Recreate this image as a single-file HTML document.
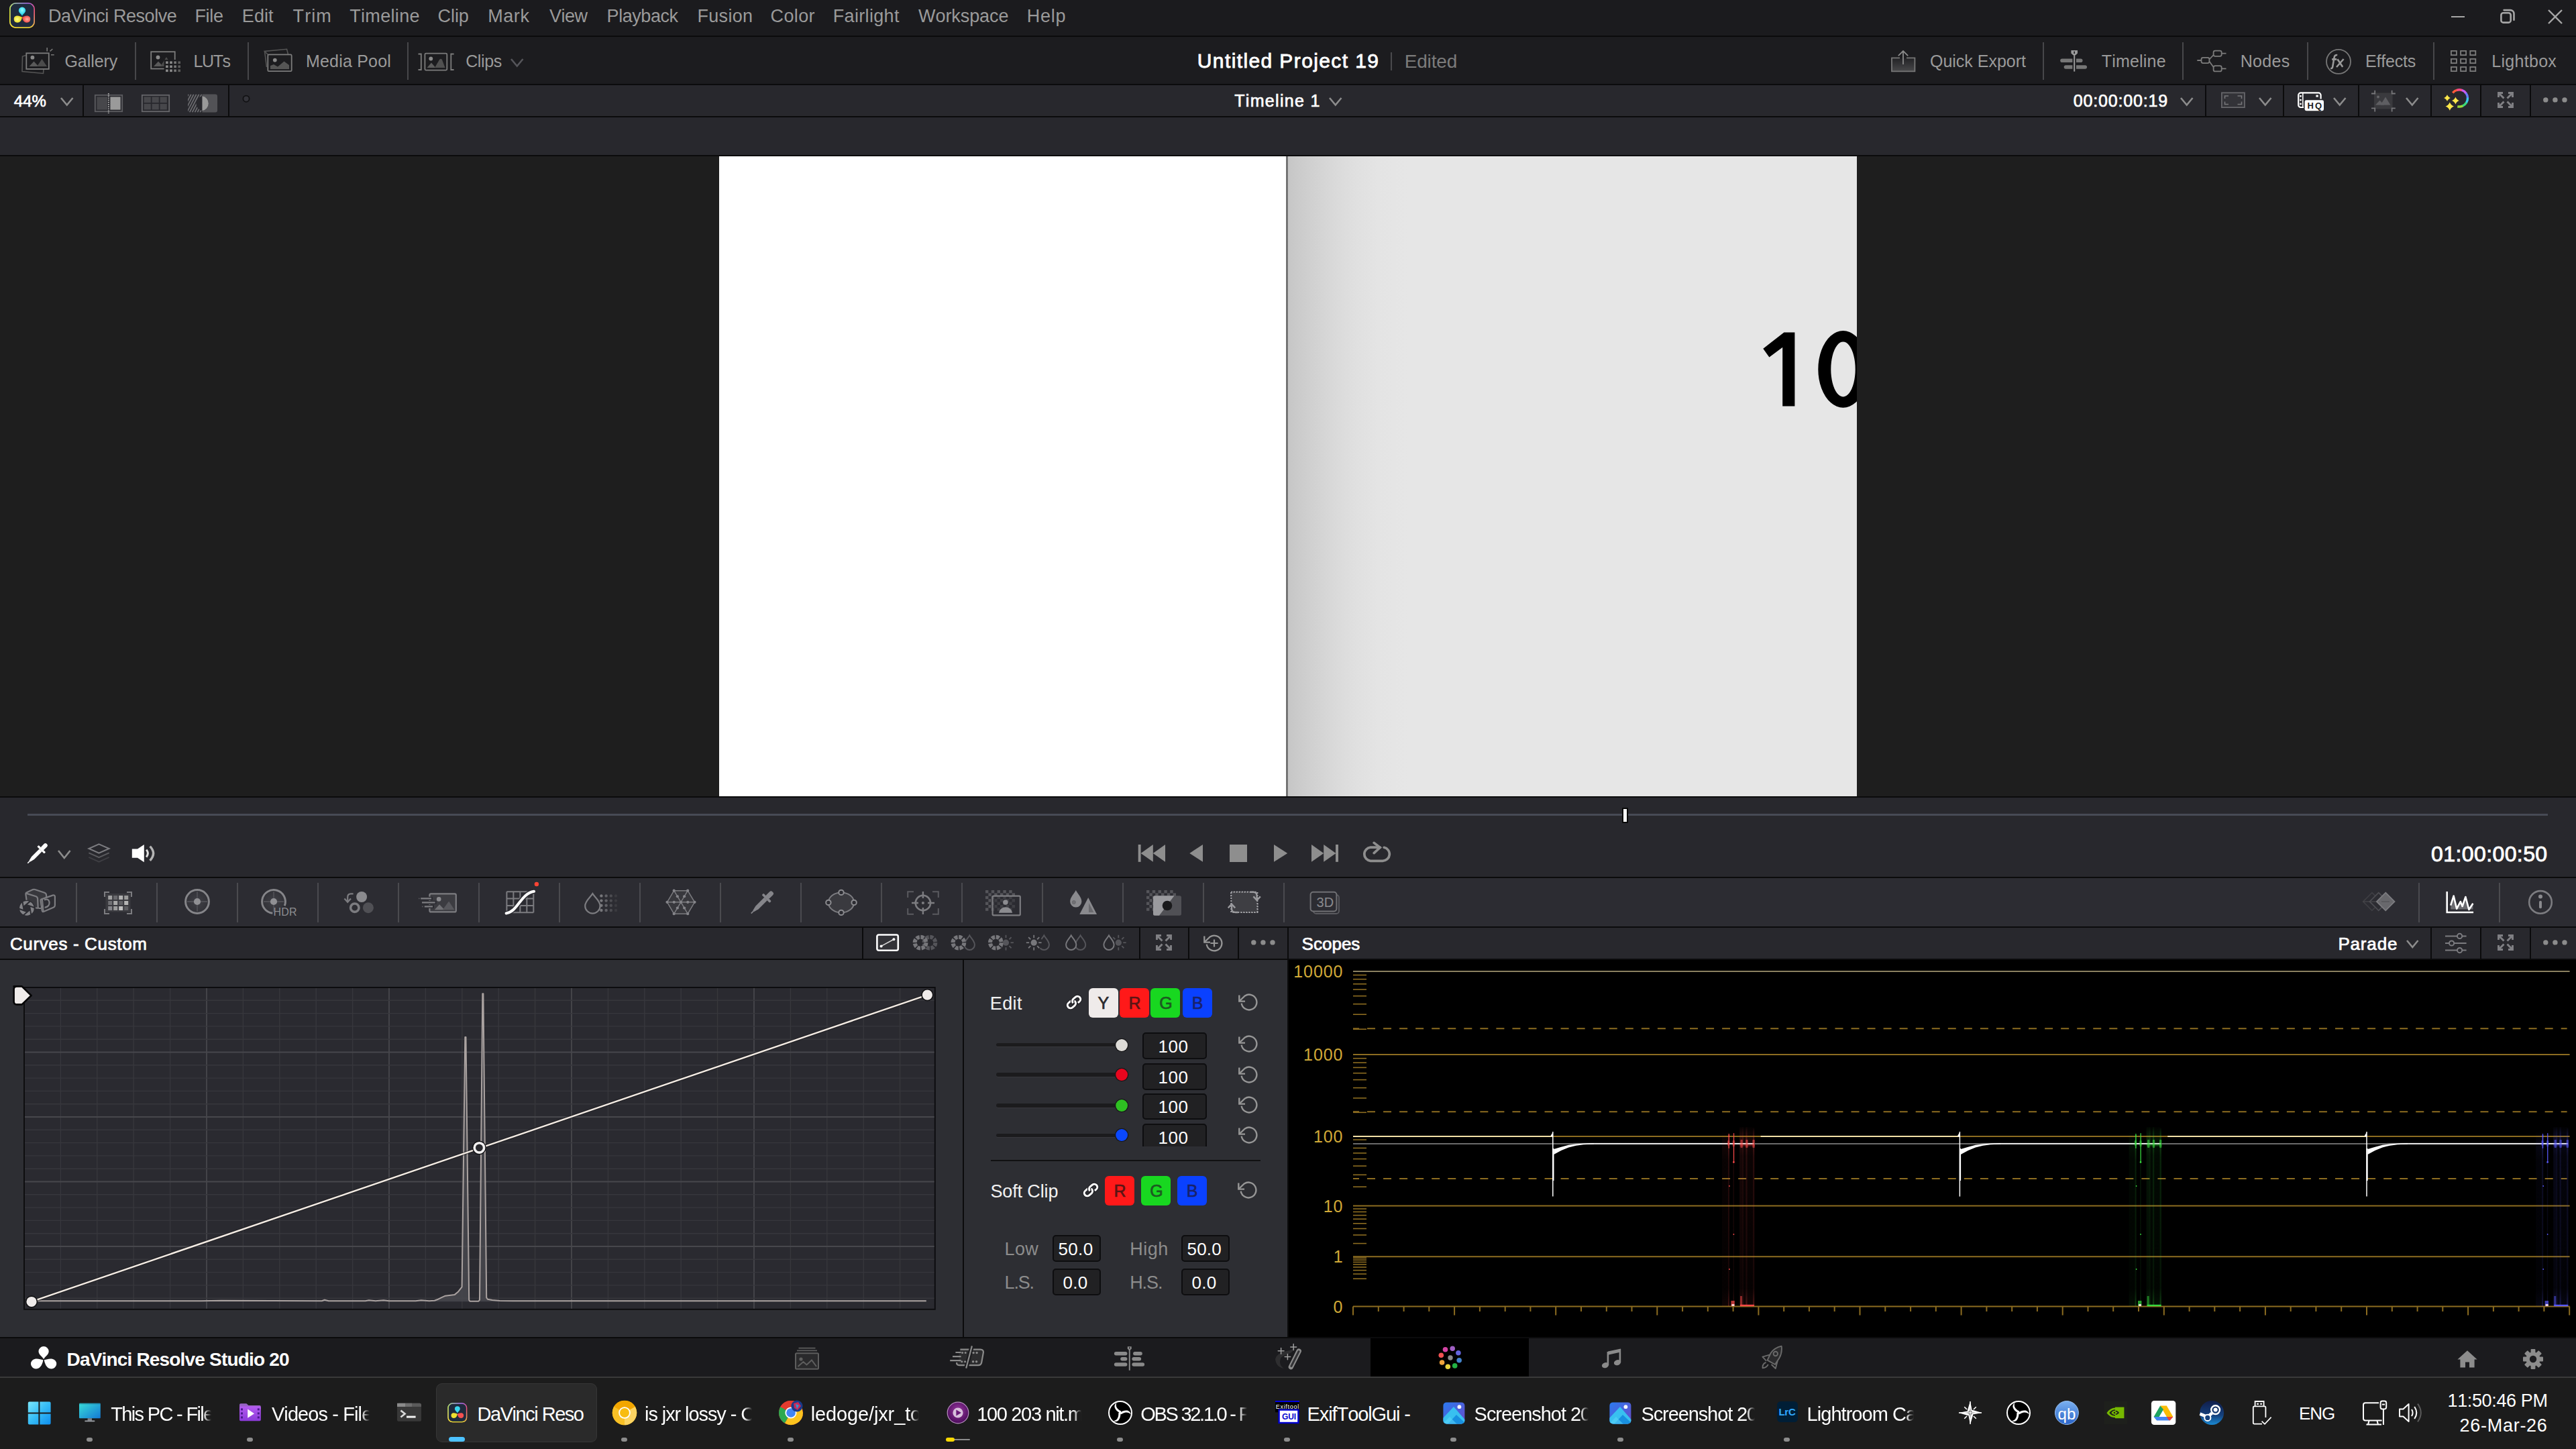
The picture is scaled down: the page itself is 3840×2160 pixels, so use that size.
<!DOCTYPE html>
<html><head><meta charset="utf-8"><title>DaVinci Resolve</title>
<style>
html,body{margin:0;padding:0;background:#1e1e1e;}
body{width:3840px;height:2160px;position:relative;overflow:hidden;font-family:"Liberation Sans",sans-serif;}
.t{position:absolute;white-space:nowrap;font-kerning:none;font-family:"Liberation Sans",sans-serif;}
svg{overflow:visible}
</style></head><body>

<!-- p01_bg.py -->
<div style="position:absolute;left:0px;top:0px;width:3840px;height:53px;background:#1b1b1e;"></div>
<div style="position:absolute;left:0px;top:53px;width:3840px;height:2px;background:#0b0b0c;"></div>
<div style="position:absolute;left:0px;top:55px;width:3840px;height:70px;background:#1c1c1f;"></div>
<div style="position:absolute;left:0px;top:125px;width:3840px;height:2px;background:#0b0b0c;"></div>
<div style="position:absolute;left:0px;top:127px;width:3840px;height:46px;background:#28282d;"></div>
<div style="position:absolute;left:0px;top:173px;width:3840px;height:2px;background:#0b0b0c;"></div>
<div style="position:absolute;left:0px;top:175px;width:3840px;height:56px;background:#28282d;"></div>
<div style="position:absolute;left:0px;top:231px;width:3840px;height:2px;background:#0b0b0c;"></div>
<div style="position:absolute;left:0px;top:233px;width:3840px;height:954px;background:#1e1e1e;"></div>
<div style="position:absolute;left:1072px;top:233px;width:846px;height:954px;background:#ffffff;"></div>
<div style="position:absolute;left:1918px;top:233px;width:850px;height:954px;background:#e6e6e6;"></div>
<div style="position:absolute;left:1918px;top:233px;width:180px;height:954px;background:linear-gradient(90deg,#c5c5c5 0%,#cacaca 8%,#d2d2d2 24%,#dadada 41%,#e0e0e0 58%,#e4e4e4 76%,#e6e6e6 100%);"></div>
<div style="position:absolute;left:1916.6px;top:233px;width:3.2px;height:954px;background:linear-gradient(90deg,#8a8a8a,#646464 40%,#6a6a6a 70%,#9a9a9a);"></div>
<div style="position:absolute;left:0px;top:1187px;width:3840px;height:2px;background:#0b0b0c;"></div>
<div style="position:absolute;left:0px;top:1189px;width:3840px;height:118px;background:#28282d;"></div>
<div style="position:absolute;left:0px;top:1307px;width:3840px;height:2.2px;background:#0b0b0c;"></div>
<div style="position:absolute;left:0px;top:1309.2px;width:3840px;height:71.8px;background:#2c2c32;"></div>
<div style="position:absolute;left:0px;top:1381px;width:3840px;height:2px;background:#0b0b0c;"></div>
<div style="position:absolute;left:0px;top:1383px;width:3840px;height:46px;background:#28282d;"></div>
<div style="position:absolute;left:0px;top:1429px;width:3840px;height:2px;background:#0b0b0c;"></div>
<div style="position:absolute;left:0px;top:1431px;width:1920px;height:562px;background:#2d2e33;"></div>
<div style="position:absolute;left:1435px;top:1431px;width:2px;height:562px;background:#0b0b0c;"></div>
<div style="position:absolute;left:1920px;top:1431px;width:1920px;height:562px;background:#000;"></div>
<div style="position:absolute;left:0px;top:1993px;width:3840px;height:2px;background:#0b0b0c;"></div>
<div style="position:absolute;left:0px;top:1995px;width:3840px;height:57px;background:#1b1b1e;"></div>
<div style="position:absolute;left:2043px;top:1995px;width:236px;height:57px;background:#000;"></div>
<div style="position:absolute;left:0px;top:2052px;width:3840px;height:2px;background:#3a3a3a;"></div>
<div style="position:absolute;left:0px;top:2054px;width:3840px;height:106px;background:#1c1c1c;"></div>
<!-- p02_top.py -->
<svg style="position:absolute;left:2600px;top:480px;overflow:hidden" width="168" height="140" viewBox="0 0 168 140"><polygon points="59.4,15.4 75.4,15.4 75.4,125.5 57.2,125.5 57.2,37.8 37.4,52.6 28.3,39.7" fill="#000"/><path fill-rule="evenodd" fill="#000" d="M147.5 13.1 a37.2 57.3 0 1 0 0.01 0 Z M147.5 29.4 a18.2 41 0 1 1 -0.01 0 Z"/></svg>
<svg style="position:absolute;left:14px;top:4px;" width="38" height="38" viewBox="0 0 38 38"><defs><linearGradient id="lg1" x1="0" y1="0" x2="1" y2="1"><stop offset="0" stop-color="#3fe0e8"/><stop offset="0.35" stop-color="#9a6cf0"/><stop offset="0.65" stop-color="#ff4a6a"/><stop offset="1" stop-color="#ff9a30"/></linearGradient><linearGradient id="lg2" x1="1" y1="0" x2="0" y2="1"><stop offset="0" stop-color="#c050e0" stop-opacity="0"/><stop offset="0.6" stop-color="#d8e030" stop-opacity="0.9"/><stop offset="1" stop-color="#f0f020"/></linearGradient><radialGradient id="rc" cx="0.5" cy="0.35" r="0.6"><stop offset="0" stop-color="#9ff"/><stop offset="1" stop-color="#10c8e8"/></radialGradient><radialGradient id="ry" cx="0.4" cy="0.5" r="0.6"><stop offset="0" stop-color="#ff8"/><stop offset="1" stop-color="#e8d818"/></radialGradient><radialGradient id="rr" cx="0.6" cy="0.5" r="0.6"><stop offset="0" stop-color="#ffb0a0"/><stop offset="1" stop-color="#f03838"/></radialGradient></defs><rect x="0.8" y="0.8" width="36.4" height="36.4" rx="9" fill="#1f2b3d" stroke="url(#lg1)" stroke-width="1.6"/><rect x="0.8" y="0.8" width="36.4" height="36.4" rx="9" fill="none" stroke="url(#lg2)" stroke-width="1.6"/><path d="M19 6.5 a5.2 5.2 0 0 1 5.2 5.2 c0 3.2 -3.4 4.6 -5.2 8 c-1.8 -3.4 -5.2 -4.8 -5.2 -8 a5.2 5.2 0 0 1 5.2 -5.2Z" fill="url(#rc)"/><path d="M19 21.5 c-0.6 3.6 -2.2 8.2 -7.2 8.2 a5.1 5.1 0 0 1 -1 -10.1 c3.4 -0.6 5.6 1.2 8.2 1.9Z" fill="url(#ry)"/><path d="M19 21.5 c0.6 3.6 2.2 8.2 7.2 8.2 a5.1 5.1 0 0 0 1 -10.1 c-3.4 -0.6 -5.6 1.2 -8.2 1.9Z" fill="url(#rr)"/></svg>
<div class="t" style="left:72.0px;top:9.0px;font-size:27px;line-height:30px;color:#9a9a9a;letter-spacing:-0.45px;">DaVinci Resolve</div>
<div class="t" style="left:290.4px;top:9.0px;font-size:27px;line-height:30px;color:#9a9a9a;letter-spacing:-0.30px;">File</div>
<div class="t" style="left:360.8px;top:9.0px;font-size:27px;line-height:30px;color:#9a9a9a;letter-spacing:0.10px;">Edit</div>
<div class="t" style="left:436.6px;top:9.0px;font-size:27px;line-height:30px;color:#9a9a9a;letter-spacing:1.07px;">Trim</div>
<div class="t" style="left:521.2px;top:9.0px;font-size:27px;line-height:30px;color:#9a9a9a;letter-spacing:0.33px;">Timeline</div>
<div class="t" style="left:652.6px;top:9.0px;font-size:27px;line-height:30px;color:#9a9a9a;letter-spacing:-0.10px;">Clip</div>
<div class="t" style="left:727.2px;top:9.0px;font-size:27px;line-height:30px;color:#9a9a9a;letter-spacing:0.59px;">Mark</div>
<div class="t" style="left:818.9px;top:9.0px;font-size:27px;line-height:30px;color:#9a9a9a;letter-spacing:-0.49px;">View</div>
<div class="t" style="left:904.6px;top:9.0px;font-size:27px;line-height:30px;color:#9a9a9a;letter-spacing:-0.45px;">Playback</div>
<div class="t" style="left:1039.4px;top:9.0px;font-size:27px;line-height:30px;color:#9a9a9a;letter-spacing:0.33px;">Fusion</div>
<div class="t" style="left:1148.6px;top:9.0px;font-size:27px;line-height:30px;color:#9a9a9a;letter-spacing:0.37px;">Color</div>
<div class="t" style="left:1241.8px;top:9.0px;font-size:27px;line-height:30px;color:#9a9a9a;letter-spacing:0.32px;">Fairlight</div>
<div class="t" style="left:1369.1px;top:9.0px;font-size:27px;line-height:30px;color:#9a9a9a;letter-spacing:-0.08px;">Workspace</div>
<div class="t" style="left:1530.7px;top:9.0px;font-size:27px;line-height:30px;color:#9a9a9a;letter-spacing:0.74px;">Help</div>
<div style="position:absolute;left:3654px;top:23.8px;width:20px;height:2.4px;background:#a6a6a6;"></div>
<svg style="position:absolute;left:3725px;top:12px;" width="26" height="26" viewBox="0 0 26 26"><rect x="3.4" y="7.3" width="14.3" height="14.3" rx="3.2" fill="none" stroke="#a6a6a6" stroke-width="2.6"/><path d="M7.6 3.1 H17.3 A5.2 5.2 0 0 1 22.5 8.3 V17.7" fill="none" stroke="#a6a6a6" stroke-width="2.6" stroke-linecap="round"/></svg>
<svg style="position:absolute;left:3797px;top:13px;" width="24" height="24" viewBox="0 0 24 24"><path d="M2 2 L22 22 M22 2 L2 22" stroke="#a6a6a6" stroke-width="2.4" fill="none"/></svg>
<svg style="position:absolute;left:30px;top:68px;" width="54" height="44" viewBox="0 0 54 44"><path d="M8.6 14.5 L3.5 16 L3 38.5 L34.5 41.5 L35 35.5" fill="none" stroke="#555" stroke-width="1.6"/><rect x="9.3" y="11.3" width="33.5" height="23.6" fill="none" stroke="#7c7c7c" stroke-width="1.8"/><circle cx="18.4" cy="17.7" r="2.9" fill="#8a8a8a"/><polygon points="13.5,31 20.5,23.5 27.5,31" fill="#5a5a5a"/><polygon points="25,31 32.5,20 40,31" fill="#4c4c4c"/><path d="M40.2 3 V8.4 M44.5 8.4 L48.4 5 M46 13.8 H50.7" stroke="#777" stroke-width="1.6" fill="none"/></svg>
<div class="t" style="left:96.5px;top:77.0px;font-size:25px;line-height:28px;color:#9a9a9a;letter-spacing:-0.08px;">Gallery</div>
<div style="position:absolute;left:201px;top:63px;width:2px;height:56px;background:#47474a;"></div>
<svg style="position:absolute;left:224px;top:76px;" width="48" height="34" viewBox="0 0 48 34"><rect x="1.2" y="1.2" width="35.5" height="25.3" fill="none" stroke="#7c7c7c" stroke-width="1.8"/><circle cx="11.5" cy="9.5" r="2.9" fill="#8a8a8a"/><polygon points="5,23 12,15.5 19,23" fill="#5a5a5a"/><polygon points="15,23 24,9 33,23" fill="#4c4c4c"/><rect x="20.6" y="13" width="26" height="20" fill="#1c1c1f"/><rect x="23.1" y="15.4" width="3.6" height="3.6" fill="#8c8c8c"/><rect x="23.1" y="21.45" width="3.6" height="3.6" fill="#8c8c8c"/><rect x="23.1" y="27.5" width="3.6" height="3.6" fill="#8c8c8c"/><rect x="29.2" y="15.4" width="3.6" height="3.6" fill="#8c8c8c"/><rect x="29.2" y="21.45" width="3.6" height="3.6" fill="#8c8c8c"/><rect x="29.2" y="27.5" width="3.6" height="3.6" fill="#8c8c8c"/><rect x="35.3" y="15.4" width="3.6" height="3.6" fill="#777"/><rect x="35.3" y="21.45" width="3.6" height="3.6" fill="#777"/><rect x="35.3" y="27.5" width="3.6" height="3.6" fill="#777"/><rect x="41.4" y="15.4" width="3.6" height="3.6" fill="#5c5c5c"/><rect x="41.4" y="21.45" width="3.6" height="3.6" fill="#5c5c5c"/><rect x="41.4" y="27.5" width="3.6" height="3.6" fill="#5c5c5c"/></svg>
<div class="t" style="left:288.6px;top:77.0px;font-size:25px;line-height:28px;color:#9a9a9a;letter-spacing:-1.42px;">LUTs</div>
<div style="position:absolute;left:369px;top:63px;width:2px;height:56px;background:#47474a;"></div>
<svg style="position:absolute;left:390px;top:70px;" width="48" height="40" viewBox="0 0 48 40"><path d="M9.5 11.5 L4.5 6.5 L37.5 3.3 L39.5 11" fill="none" stroke="#555" stroke-width="1.6"/><path d="M4.5 6.5 L7.5 30" fill="none" stroke="#555" stroke-width="1.6"/><rect x="9.3" y="11.4" width="35.4" height="24.8" rx="1.5" fill="none" stroke="#7c7c7c" stroke-width="1.8"/><circle cx="19.8" cy="19.6" r="2.9" fill="#8a8a8a"/><path d="M13 33 V28 L18 26 L24 29.5 L33.5 21.5 L41 27 V33 Z" fill="#555"/></svg>
<div class="t" style="left:455.9px;top:77.0px;font-size:25px;line-height:28px;color:#9a9a9a;letter-spacing:0.21px;">Media Pool</div>
<div style="position:absolute;left:607px;top:63px;width:2px;height:56px;background:#47474a;"></div>
<svg style="position:absolute;left:622px;top:76px;" width="58" height="32" viewBox="0 0 58 32"><path d="M1.5 4.5 H5.8 V28 H1.5" fill="none" stroke="#7c7c7c" stroke-width="1.8"/><path d="M54.6 4.5 H50.3 V28 H54.6" fill="none" stroke="#7c7c7c" stroke-width="1.8"/><rect x="11.4" y="3.7" width="32.9" height="24.9" rx="1.5" fill="none" stroke="#7c7c7c" stroke-width="1.8"/><circle cx="20.3" cy="11.5" r="2.9" fill="#8a8a8a"/><polygon points="14.5,25 21,17.5 27.5,25" fill="#5c5c5c"/><path d="M26 25 L33 13 Q35 10.5 37 13 L41.5 25 Z" fill="#505050"/></svg>
<div class="t" style="left:694.2px;top:77.0px;font-size:25px;line-height:28px;color:#9a9a9a;letter-spacing:-0.40px;">Clips</div>
<svg style="position:absolute;left:759.55px;top:85.95px;" width="21.5" height="14.5" viewBox="0 0 21.5 14.5"><path d="M2 2 L10.75 12.5 L19.5 2" fill="none" stroke="#55555a" stroke-width="2.6" stroke-linecap="butt" stroke-linejoin="miter"/></svg>
<div class="t" style="left:1784.8px;top:74.0px;font-size:30px;line-height:33px;color:#fff;letter-spacing:1.39px;-webkit-text-stroke:0.84px #fff;">Untitled Project 19</div>
<div style="position:absolute;left:2073px;top:77.5px;width:2px;height:27px;background:#4a4a4d;"></div>
<div class="t" style="left:2093.7px;top:76.0px;font-size:28px;line-height:31px;color:#7b7b7b;letter-spacing:-0.16px;">Edited</div>
<svg style="position:absolute;left:2816px;top:72px;" width="44" height="38" viewBox="0 0 44 38"><defs><linearGradient id="qe" x1="0" y1="0" x2="0" y2="1"><stop offset="0" stop-color="#222225"/><stop offset="1" stop-color="#48484a"/></linearGradient></defs><path d="M16 14.4 H4 V34.4 H38.4 V14.4 H26" fill="url(#qe)" stroke="#777" stroke-width="1.8"/><path d="M21 24 V4.5 M13.8 11.2 L21 4 L28.2 11.2" fill="none" stroke="#8a8a8a" stroke-width="1.8"/></svg>
<div class="t" style="left:2877.0px;top:77.0px;font-size:25px;line-height:28px;color:#9a9a9a;letter-spacing:-0.01px;">Quick Export</div>
<div style="position:absolute;left:3045px;top:63px;width:2px;height:56px;background:#47474a;"></div>
<svg style="position:absolute;left:3068px;top:72px;" width="46" height="38" viewBox="0 0 46 38"><rect x="3.2" y="15.5" width="33.3" height="5.6" rx="2.8" fill="#777"/><rect x="8.7" y="25.2" width="34.3" height="5.6" rx="2.8" fill="#777"/><rect x="21.4" y="10" width="5.6" height="24" fill="#1c1c1f"/><rect x="23.2" y="6" width="2" height="28.6" fill="#9a9a9a"/><path d="M19.4 3 H29 V7.5 L26 10.2 H22.4 L19.4 7.5 Z" fill="#9a9a9a"/><rect x="23.4" y="4.6" width="1.6" height="3.4" fill="#1c1c1f"/></svg>
<div class="t" style="left:3132.7px;top:77.0px;font-size:25px;line-height:28px;color:#9a9a9a;letter-spacing:0.21px;">Timeline</div>
<div style="position:absolute;left:3253px;top:63px;width:2px;height:56px;background:#47474a;"></div>
<svg style="position:absolute;left:3272px;top:72px;" width="50" height="38" viewBox="0 0 50 38"><g fill="none" stroke="#7c7c7c" stroke-width="1.8"><rect x="9.5" y="13.9" width="11.9" height="8.2" rx="2.5"/><rect x="27.6" y="3.6" width="12.1" height="8.2" rx="2.5"/><rect x="27.6" y="26.2" width="12.1" height="8.2" rx="2.5"/><path d="M3.3 18 H9.5 M39.7 7.7 H46.5 M39.7 30.3 H46.5 M21.4 16.5 L27.6 10 M21.4 19.5 L27.6 28"/></g></svg>
<div class="t" style="left:3339.8px;top:77.0px;font-size:25px;line-height:28px;color:#9a9a9a;letter-spacing:0.27px;">Nodes</div>
<div style="position:absolute;left:3439px;top:63px;width:2px;height:56px;background:#47474a;"></div>
<svg style="position:absolute;left:3466px;top:72px;" width="40" height="40" viewBox="0 0 40 40"><circle cx="20" cy="19.8" r="18" fill="none" stroke="#777" stroke-width="1.8"/><path d="M18.2 10.2 Q14.4 9.4 13.6 13.4 L11.2 27.6 Q10.8 30.4 8.2 29.8 M10.2 16.4 H17.2 M18.4 16.2 L26.2 27.8 M27.6 16 L17 28" fill="none" stroke="#9a9a9a" stroke-width="2.6"/></svg>
<div class="t" style="left:3526.0px;top:77.0px;font-size:25px;line-height:28px;color:#9a9a9a;letter-spacing:-0.18px;">Effects</div>
<div style="position:absolute;left:3627px;top:63px;width:2px;height:56px;background:#47474a;"></div>
<svg style="position:absolute;left:3652px;top:74px;" width="42" height="36" viewBox="0 0 42 36"><rect x="1.9" y="1.9" width="8" height="6.2" fill="none" stroke="#7c7c7c" stroke-width="1.8"/><rect x="1.9" y="13.9" width="8" height="6.2" fill="none" stroke="#7c7c7c" stroke-width="1.8"/><rect x="1.9" y="25.9" width="8" height="6.2" fill="none" stroke="#7c7c7c" stroke-width="1.8"/><rect x="16.1" y="1.9" width="8" height="6.2" fill="none" stroke="#7c7c7c" stroke-width="1.8"/><rect x="16.1" y="13.9" width="8" height="6.2" fill="none" stroke="#7c7c7c" stroke-width="1.8"/><rect x="16.1" y="25.9" width="8" height="6.2" fill="none" stroke="#7c7c7c" stroke-width="1.8"/><rect x="30.3" y="1.9" width="8" height="6.2" fill="none" stroke="#7c7c7c" stroke-width="1.8"/><rect x="30.3" y="13.9" width="8" height="6.2" fill="none" stroke="#7c7c7c" stroke-width="1.8"/><rect x="30.3" y="25.9" width="8" height="6.2" fill="none" stroke="#7c7c7c" stroke-width="1.8"/></svg>
<div class="t" style="left:3714.3px;top:77.0px;font-size:25px;line-height:28px;color:#9a9a9a;letter-spacing:0.29px;">Lightbox</div>
<!-- p03_viewbar.py -->
<div class="t" style="left:20.8px;top:137.0px;font-size:24px;line-height:27px;color:#fff;letter-spacing:-0.00px;-webkit-text-stroke:0.67px #fff;">44%</div>
<svg style="position:absolute;left:89.25px;top:143.75px;" width="21.5" height="14.5" viewBox="0 0 21.5 14.5"><path d="M2 2 L10.75 12.5 L19.5 2" fill="none" stroke="#8c8c8c" stroke-width="2.6" stroke-linecap="butt" stroke-linejoin="miter"/></svg>
<div style="position:absolute;left:123px;top:127px;width:2px;height:46px;background:#0b0b0c;"></div>
<svg style="position:absolute;left:140px;top:138px;" width="46" height="32" viewBox="0 0 46 32"><rect x="1.8" y="3.8" width="40.4" height="24.4" fill="none" stroke="#5c5c60" stroke-width="1.8"/><rect x="4.4" y="6.4" width="15.6" height="19.2" fill="#47474b"/><rect x="24.4" y="6.4" width="15.2" height="19.2" fill="#9a9a9a"/><path d="M21.8 1 V31" stroke="#b0b0b0" stroke-width="1.8" stroke-dasharray="1.7 1.5"/></svg>
<svg style="position:absolute;left:210px;top:138px;" width="46" height="32" viewBox="0 0 46 32"><rect x="1.8" y="3.8" width="40.4" height="24.4" fill="none" stroke="#66666a" stroke-width="1.8"/><rect x="4.6" y="6.4" width="10.2" height="8.6" fill="#47474b"/><rect x="4.6" y="16.8" width="10.2" height="8.6" fill="#47474b"/><rect x="16.6" y="6.4" width="10.2" height="8.6" fill="#47474b"/><rect x="16.6" y="16.8" width="10.2" height="8.6" fill="#47474b"/><rect x="28.6" y="6.4" width="10.2" height="8.6" fill="#47474b"/><rect x="28.6" y="16.8" width="10.2" height="8.6" fill="#47474b"/></svg>
<svg style="position:absolute;left:279px;top:138px;" width="48" height="32" viewBox="0 0 48 32"><defs><clipPath id="hcl"><rect x="1" y="2.5" width="21.5" height="27"/></clipPath></defs><g clip-path="url(#hcl)"><path d="M-12 29.5 L2 2.5" stroke="#6c6c70" stroke-width="1.7"/><path d="M-8.1 29.5 L5.9 2.5" stroke="#6c6c70" stroke-width="1.7"/><path d="M-4.2 29.5 L9.8 2.5" stroke="#6c6c70" stroke-width="1.7"/><path d="M-0.3 29.5 L13.7 2.5" stroke="#6c6c70" stroke-width="1.7"/><path d="M3.6 29.5 L17.6 2.5" stroke="#6c6c70" stroke-width="1.7"/><path d="M7.5 29.5 L21.5 2.5" stroke="#6c6c70" stroke-width="1.7"/><path d="M11.4 29.5 L25.4 2.5" stroke="#6c6c70" stroke-width="1.7"/><path d="M15.3 29.5 L29.3 2.5" stroke="#6c6c70" stroke-width="1.7"/><path d="M19.2 29.5 L33.2 2.5" stroke="#6c6c70" stroke-width="1.7"/><path d="M23.1 29.5 L37.1 2.5" stroke="#6c6c70" stroke-width="1.7"/><path d="M27 29.5 L41 2.5" stroke="#6c6c70" stroke-width="1.7"/><path d="M30.9 29.5 L44.9 2.5" stroke="#6c6c70" stroke-width="1.7"/></g><path d="M22.5 2.5 H42 Q45 2.5 45 5.5 V26.5 Q45 29.5 42 29.5 H22.5 Z" fill="#525256"/><path d="M22.5 5.3 A11 11 0 0 0 22.5 27 Z" fill="#28282d"/><path d="M22.5 5.3 A11 11 0 0 1 22.5 27 Z" fill="#9a9a9a"/></svg>
<div style="position:absolute;left:339.5px;top:127px;width:2px;height:46px;background:#0b0b0c;"></div>
<svg style="position:absolute;left:359px;top:139px;" width="16" height="16" viewBox="0 0 16 16"><circle cx="8" cy="8.2" r="4.6" fill="#34343a" stroke="#111113" stroke-width="1.8"/></svg>
<div class="t" style="left:1840.2px;top:136.0px;font-size:25px;line-height:28px;color:#fff;letter-spacing:1.33px;-webkit-text-stroke:0.70px #fff;">Timeline 1</div>
<svg style="position:absolute;left:1979.55px;top:143.75px;" width="21.5" height="14.5" viewBox="0 0 21.5 14.5"><path d="M2 2 L10.75 12.5 L19.5 2" fill="none" stroke="#8c8c8c" stroke-width="2.6" stroke-linecap="butt" stroke-linejoin="miter"/></svg>
<div class="t" style="left:3090.7px;top:136.0px;font-size:25px;line-height:28px;color:#fff;letter-spacing:0.85px;-webkit-text-stroke:0.70px #fff;">00:00:00:19</div>
<svg style="position:absolute;left:3249.05px;top:144.05px;" width="21.5" height="14.5" viewBox="0 0 21.5 14.5"><path d="M2 2 L10.75 12.5 L19.5 2" fill="none" stroke="#8c8c8c" stroke-width="2.6" stroke-linecap="butt" stroke-linejoin="miter"/></svg>
<div style="position:absolute;left:3287.3px;top:127px;width:2px;height:46px;background:#0b0b0c;"></div>
<svg style="position:absolute;left:3309px;top:135px;" width="40" height="28" viewBox="0 0 40 28"><rect x="2.9" y="3.3" width="34" height="21.8" fill="#333338" stroke="#66666a" stroke-width="1.8"/><path d="M7.5 12 V8 H13 M26.5 8 H32.5 V12 M32.5 16.5 V20.5 H26.5 M13 20.5 H7.5 V16.5" fill="none" stroke="#77777a" stroke-width="1.6"/></svg>
<svg style="position:absolute;left:3365.65px;top:144.05px;" width="21.5" height="14.5" viewBox="0 0 21.5 14.5"><path d="M2 2 L10.75 12.5 L19.5 2" fill="none" stroke="#8c8c8c" stroke-width="2.6" stroke-linecap="butt" stroke-linejoin="miter"/></svg>
<div style="position:absolute;left:3403.3px;top:127px;width:2px;height:46px;background:#0b0b0c;"></div>
<svg style="position:absolute;left:3423px;top:134px;" width="44" height="34" viewBox="0 0 44 34"><rect x="3.2" y="4.4" width="33.4" height="21.6" rx="3.5" fill="none" stroke="#fff" stroke-width="2.2"/><path d="M9.8 5 V25.5" stroke="#fff" stroke-width="1.6"/><rect x="5.2" y="8" width="2.6" height="2.6" fill="#fff"/><rect x="5.2" y="13.8" width="2.6" height="2.6" fill="#fff"/><rect x="5.2" y="19.6" width="2.6" height="2.6" fill="#fff"/><rect x="29.4" y="7.6" width="3.4" height="3" fill="#fff"/><rect x="11.8" y="14.4" width="30" height="17.6" rx="3.2" fill="#fff" stroke="#28282d" stroke-width="1.6"/></svg>
<div class="t" style="left:3439.4px;top:150.0px;font-size:13px;line-height:15px;color:#1b1b1e;letter-spacing:2.22px;font-weight:bold;">HQ</div>
<svg style="position:absolute;left:3477.45px;top:144.05px;" width="21.5" height="14.5" viewBox="0 0 21.5 14.5"><path d="M2 2 L10.75 12.5 L19.5 2" fill="none" stroke="#8c8c8c" stroke-width="2.6" stroke-linecap="butt" stroke-linejoin="miter"/></svg>
<div style="position:absolute;left:3514.9px;top:127px;width:2px;height:46px;background:#0b0b0c;"></div>
<svg style="position:absolute;left:3533px;top:133px;" width="40" height="36" viewBox="0 0 40 36"><rect x="6" y="5.4" width="27.6" height="24" fill="#3a3a3e"/><circle cx="12" cy="11.6" r="2" fill="#66666a"/><polygon points="8,23.5 14.5,16.5 21,23.5" fill="#5e5e62"/><polygon points="15.5,23.5 23,11.5 30.5,23.5" fill="#5e5e62"/><path d="M2 6.5 H7.2 V1.8 M32.6 1.8 V6.5 H37.8 M37.8 28.4 H32.6 V33.6 M7.2 33.6 V28.4 H2" fill="none" stroke="#77777a" stroke-width="1.8"/></svg>
<svg style="position:absolute;left:3585.45px;top:144.05px;" width="21.5" height="14.5" viewBox="0 0 21.5 14.5"><path d="M2 2 L10.75 12.5 L19.5 2" fill="none" stroke="#8c8c8c" stroke-width="2.6" stroke-linecap="butt" stroke-linejoin="miter"/></svg>
<div style="position:absolute;left:3623px;top:127px;width:2px;height:46px;background:#0b0b0c;"></div>
<svg style="position:absolute;left:3641px;top:131px;" width="42" height="38" viewBox="0 0 42 38"><path d="M15.2478 7.30088 A12.6 12.6 0 0 1 21.9128 3.15923" fill="none" stroke="#ff5a3a" stroke-width="3.4"/><path d="M21.4874 3.27093 A12.6 12.6 0 0 1 29.3273 3.60344" fill="none" stroke="#ff4a8a" stroke-width="3.4"/><path d="M28.9129 3.45612 A12.6 12.6 0 0 1 35.2033 8.14722" fill="none" stroke="#c85af0" stroke-width="3.4"/><path d="M34.9439 7.79206 A12.6 12.6 0 0 1 37.4986 15.2115" fill="none" stroke="#6a7af8" stroke-width="3.4"/><path d="M37.4843 14.7719 A12.6 12.6 0 0 1 35.4156 22.3413" fill="none" stroke="#3ac8e8" stroke-width="3.4"/><path d="M35.6515 21.9701 A12.6 12.6 0 0 1 29.6782 27.0588" fill="none" stroke="#3ad87a" stroke-width="3.4"/><path d="M30.0822 26.885 A12.6 12.6 0 0 1 22.2803 27.7247" fill="none" stroke="#9ad83a" stroke-width="3.4"/><path d="M7 9.4 Q8.456 13.544 12.6 15 Q8.456 16.456 7 20.6 Q5.544 16.456 1.4 15 Q5.544 13.544 7 9.4 Z" fill="#ffe84a" stroke="#28282d" stroke-width="0.8"/><path d="M19.4 13 Q20.96 17.44 25.4 19 Q20.96 20.56 19.4 25 Q17.84 20.56 13.4 19 Q17.84 17.44 19.4 13 Z" fill="#ffe84a" stroke="#28282d" stroke-width="0.8"/><path d="M10.8 20.8 Q12.568 25.832 17.6 27.6 Q12.568 29.368 10.8 34.4 Q9.032 29.368 4 27.6 Q9.032 25.832 10.8 20.8 Z" fill="#ffe84a" stroke="#28282d" stroke-width="0.8"/></svg>
<div style="position:absolute;left:3697px;top:127px;width:2px;height:46px;background:#0b0b0c;"></div>
<svg style="position:absolute;left:3723px;top:137.2px;" width="24" height="24" viewBox="0 0 24 24"><g fill="none" stroke="#808084" stroke-width="2.9"><path d="M1.5 8 V1.5 H8 M2 2 L9.5 9.5 M16 1.5 H22.5 V8 M22 2 L14.5 9.5 M22.5 16 V22.5 H16 M22 22 L14.5 14.5 M8 22.5 H1.5 V16 M2 22 L9.5 14.5"/></g></svg>
<div style="position:absolute;left:3771px;top:127px;width:2px;height:46px;background:#0b0b0c;"></div>
<svg style="position:absolute;left:3788px;top:142px;" width="42" height="14" viewBox="0 0 42 14"><circle cx="6.8" cy="6.9" r="3.7" fill="#8c8c8c"/><circle cx="20.9" cy="6.9" r="3.7" fill="#8c8c8c"/><circle cx="35" cy="6.9" r="3.7" fill="#8c8c8c"/></svg>
<!-- p04_transport.py -->
<div style="position:absolute;left:41px;top:1213px;width:3757px;height:3px;background:#474a55;"></div>
<div style="position:absolute;left:2417.5px;top:1203.5px;width:9.5px;height:23px;background:#fff;border:2px solid #0a0a0a;box-sizing:border-box;"></div>
<svg style="position:absolute;left:0;top:0" width="300" height="1400"><g transform="translate(55.4,1272.6) scale(1) rotate(45 0 0)"><rect x="-3.1" y="-20.4" width="6.2" height="11" rx="2.6" fill="#fff"/><rect x="-7.4" y="-10.6" width="14.8" height="3.3" rx="1.2" fill="#fff"/><path d="M-2.8 -7.4 H2.8 V9 L1.2 15.6 H-1.2 L-2.8 9 Z" fill="#fff"/><rect x="-0.8" y="15" width="1.6" height="5" fill="#fff"/></g></svg>
<svg style="position:absolute;left:85.2px;top:1265.5px;" width="21.6" height="15" viewBox="0 0 21.6 15"><path d="M2 2 L10.8 13 L19.6 2" fill="none" stroke="#8c8c8c" stroke-width="2.6" stroke-linecap="butt" stroke-linejoin="miter"/></svg>
<svg style="position:absolute;left:128px;top:1254px;" width="40" height="36" viewBox="0 0 40 36"><path d="M19.5 4.4 L34.6 11 L19.5 17.6 L4.4 11 Z" fill="none" stroke="#7c7c80" stroke-width="2"/><path d="M4.4 17.4 L19.5 24.2 L34.6 17.4" fill="none" stroke="#5a5a5e" stroke-width="2"/><path d="M4.4 23.8 L19.5 30.6 L34.6 23.8" fill="none" stroke="#3e3e43" stroke-width="2"/></svg>
<svg style="position:absolute;left:194px;top:1256px;" width="40" height="32" viewBox="0 0 40 32"><path d="M2.8 9.6 H11 L20.8 3 V29.2 L11 22.7 H2.8 Z" fill="#fff"/><path d="M24.2 10.6 Q28.6 16 24.2 21.6" fill="none" stroke="#e0e0e0" stroke-width="3"/><path d="M29.6 5.6 Q39.6 16 29.6 26.8" fill="none" stroke="#b4b4b4" stroke-width="3.4"/></svg>
<svg style="position:absolute;left:1696px;top:1258px;" width="44" height="28" viewBox="0 0 44 28"><rect x="0.7" y="1" width="3.9" height="25.8" fill="#8e8e8e"/><polygon points="4.6,13.9 22.8,1 22.8,26.8" fill="#8e8e8e"/><polygon points="22.8,13.9 41,1 41,26.8" fill="#8e8e8e"/></svg>
<svg style="position:absolute;left:1772px;top:1258px;" width="24" height="28" viewBox="0 0 24 28"><polygon points="1.3,13.9 21,1 21,26.8" fill="#8e8e8e"/></svg>
<div style="position:absolute;left:1832.9px;top:1259px;width:26.4px;height:25.8px;background:#8e8e8e;"></div>
<svg style="position:absolute;left:1898px;top:1258px;" width="24" height="28" viewBox="0 0 24 28"><polygon points="21.2,13.9 1,1 1,26.8" fill="#8e8e8e"/></svg>
<svg style="position:absolute;left:1954px;top:1258px;" width="44" height="28" viewBox="0 0 44 28"><polygon points="19.2,13.9 1,1 1,26.8" fill="#8e8e8e"/><polygon points="37.4,13.9 19.2,1 19.2,26.8" fill="#8e8e8e"/><rect x="37" y="1" width="4" height="25.8" fill="#8e8e8e"/></svg>
<svg style="position:absolute;left:2029px;top:1252px;" width="48" height="36" viewBox="0 0 48 36"><path d="M28 11.2 H13.9 A10.1 10.1 0 0 0 13.9 31.3 H32.1 A10.1 10.1 0 0 0 34.2 11.3" fill="none" stroke="#8e8e8e" stroke-width="3.7" stroke-linecap="round"/><path d="M19.2 4.4 L28.2 11.4 L19.2 19.6" fill="none" stroke="#8e8e8e" stroke-width="3.7" stroke-linecap="round" stroke-linejoin="miter"/></svg>
<div class="t" style="left:3624.0px;top:1255.0px;font-size:32px;line-height:36px;color:#fff;letter-spacing:0.41px;-webkit-text-stroke:0.90px #fff;">01:00:00:50</div>
<div style="position:absolute;left:113px;top:1315.5px;width:2px;height:59px;background:#4a4a4f;"></div>
<div style="position:absolute;left:233px;top:1315.5px;width:2px;height:59px;background:#4a4a4f;"></div>
<div style="position:absolute;left:353px;top:1315.5px;width:2px;height:59px;background:#4a4a4f;"></div>
<div style="position:absolute;left:473px;top:1315.5px;width:2px;height:59px;background:#4a4a4f;"></div>
<div style="position:absolute;left:593px;top:1315.5px;width:2px;height:59px;background:#4a4a4f;"></div>
<div style="position:absolute;left:713px;top:1315.5px;width:2px;height:59px;background:#4a4a4f;"></div>
<div style="position:absolute;left:833px;top:1315.5px;width:2px;height:59px;background:#4a4a4f;"></div>
<div style="position:absolute;left:953px;top:1315.5px;width:2px;height:59px;background:#4a4a4f;"></div>
<div style="position:absolute;left:1073px;top:1315.5px;width:2px;height:59px;background:#4a4a4f;"></div>
<div style="position:absolute;left:1193px;top:1315.5px;width:2px;height:59px;background:#4a4a4f;"></div>
<div style="position:absolute;left:1313px;top:1315.5px;width:2px;height:59px;background:#4a4a4f;"></div>
<div style="position:absolute;left:1433px;top:1315.5px;width:2px;height:59px;background:#4a4a4f;"></div>
<div style="position:absolute;left:1553px;top:1315.5px;width:2px;height:59px;background:#4a4a4f;"></div>
<div style="position:absolute;left:1673px;top:1315.5px;width:2px;height:59px;background:#4a4a4f;"></div>
<div style="position:absolute;left:1793px;top:1315.5px;width:2px;height:59px;background:#4a4a4f;"></div>
<div style="position:absolute;left:1913px;top:1315.5px;width:2px;height:59px;background:#4a4a4f;"></div>
<div style="position:absolute;left:3605px;top:1315.5px;width:2px;height:59px;background:#4a4a4f;"></div>
<div style="position:absolute;left:3725px;top:1315.5px;width:2px;height:59px;background:#4a4a4f;"></div>
<svg style="position:absolute;left:26px;top:1320px;" width="62" height="50" viewBox="0 0 62 50"><path d="M13.6 22 L12.4 13 Q12.2 11 14 10.3 L23 6.1 Q24.6 5.5 26.2 6 L40.4 10.8 Q42.9 11.8 43.1 14.4 L43.3 20 L30.6 33.8 L14 30 Z" fill="#38383d"/><path d="M13.6 22 L12.4 13 Q12.2 11 14 10.3 L23 6.1 Q24.6 5.5 26.2 6 L40.4 10.8 Q42.9 11.8 43.1 14.4 L43.2 19" fill="none" stroke="#7c7c80" stroke-width="2.2"/><path d="M12.8 11.6 L27.6 16.2 Q30 17.2 30.1 19.6 L30.6 32 Q30.7 34 32.6 34 L35 34 M30.6 34 L27 33.2" fill="none" stroke="#7c7c80" stroke-width="2.2"/><path d="M34.7 22.8 Q34.3 21 36.1 20.4 L52.6 14.6 Q55.7 13.8 55.9 16.6 L55.9 29.6 Q55.9 31.6 54.1 32.4 L39.5 38.8 Q37.1 39.8 36.7 37.4 Z" fill="#2c2c32" stroke="#7c7c80" stroke-width="2.2"/><path d="M37 21 L38.6 38" stroke="#7c7c80" stroke-width="2"/><path d="M40 21.4 Q46.6 18.6 47.6 25 Q48 31.6 40.6 32.8" fill="none" stroke="#7c7c80" stroke-width="2.2"/><circle cx="13.9" cy="33.9" r="12.2" fill="#2c2c32"/><circle cx="13.9" cy="33.9" r="10.8" fill="#828286"/><polygon points="18.97,35.75 14.84,39.22 9.76,37.37 8.83,32.05 12.96,28.58 18.04,30.43" fill="#2c2c32"/><path d="M18.97 35.75 L8.94 44.17 M14.84 39.22 L2.53 34.74 M9.76 37.37 L7.49 24.47 M8.83 32.05 L18.86 23.63 M12.96 28.58 L25.27 33.06 M18.04 30.43 L20.31 43.33 " stroke="#2c2c32" stroke-width="2" fill="none"/></svg>
<svg style="position:absolute;left:155px;top:1329px;" width="42" height="34" viewBox="0 0 42 34"><rect x="2.4" y="3" width="37.2" height="27.6" fill="#3a3a3f"/><rect x="6.2" y="6" width="6" height="6" fill="#a0a0a0"/><rect x="6.2" y="14" width="6" height="6" fill="#707074"/><rect x="6.2" y="22" width="6" height="6" fill="#85858a"/><rect x="14.2" y="6" width="6" height="6" fill="#6a6a6e"/><rect x="14.2" y="14" width="6" height="6" fill="#a8a8a8"/><rect x="14.2" y="22" width="6" height="6" fill="#9c9c9c"/><rect x="22.2" y="6" width="6" height="6" fill="#b0b0b0"/><rect x="22.2" y="14" width="6" height="6" fill="#606064"/><rect x="22.2" y="22" width="6" height="6" fill="#c0c0c0"/><rect x="30.2" y="6" width="6" height="6" fill="#9a9a9a"/><rect x="30.2" y="14" width="6" height="6" fill="#b4b4b4"/><rect x="30.2" y="22" width="6" height="6" fill="#5c5c60"/><path d="M8 1 H1 V8 M34 1 H41 V8 M41 26 V33 H34 M8 33 H1 V26" fill="none" stroke="#7c7c80" stroke-width="2"/></svg>
<svg style="position:absolute;left:274px;top:1324px;" width="40" height="40" viewBox="0 0 40 40"><defs><radialGradient id="whg"><stop offset="0" stop-color="#404046"/><stop offset="1" stop-color="#333339"/></radialGradient></defs><circle cx="20" cy="20" r="15.6" fill="url(#whg)"/><path d="M20 5 V35 M5 20 H35" stroke="#4e4e54" stroke-width="1.8"/><circle cx="20" cy="20" r="5.1" fill="#909094"/><circle cx="20" cy="20" r="17.4" fill="none" stroke="#858589" stroke-width="3"/></svg>
<svg style="position:absolute;left:388px;top:1324px;" width="56" height="44" viewBox="0 0 56 44"><defs><radialGradient id="whg2"><stop offset="0" stop-color="#404046"/><stop offset="1" stop-color="#333339"/></radialGradient></defs><circle cx="20" cy="20" r="15.6" fill="url(#whg2)"/><path d="M20 5 V35 M5 20 H35" stroke="#4e4e54" stroke-width="1.8"/><circle cx="20" cy="20" r="5.1" fill="#909094"/><path d="M18.33 37.32 A17.4 17.4 0 1 1 36.24 26.24" fill="none" stroke="#858589" stroke-width="3"/></svg>
<div class="t" style="left:407.5px;top:1351.0px;font-size:16px;line-height:17px;color:#8c8c90;letter-spacing:0.25px;">HDR</div>
<svg style="position:absolute;left:510px;top:1326px;" width="50" height="38" viewBox="0 0 50 38"><circle cx="29.1" cy="11" r="8" fill="#8a8a8e"/><circle cx="18.8" cy="27.2" r="6.2" fill="none" stroke="#7c7c80" stroke-width="3.6"/><circle cx="38.9" cy="27.2" r="8" fill="#505055"/><path d="M16.6 6.4 H13 Q8.2 6.4 8.2 11.4 V18" fill="none" stroke="#7c7c80" stroke-width="2.2"/><path d="M3.4 13.6 L8.2 18.8 L13 13.6" fill="none" stroke="#7c7c80" stroke-width="2.2"/></svg>
<svg style="position:absolute;left:624px;top:1328px;" width="60" height="36" viewBox="0 0 60 36"><rect x="16.4" y="4.4" width="39.4" height="27" rx="2" fill="#3c3c41" stroke="#7c7c80" stroke-width="2.2"/><circle cx="30.2" cy="12.4" r="3.3" fill="#8a8a8e"/><polygon points="23.7,28.2 31.1,20.2 38.6,28.2" fill="#707074"/><polygon points="35.8,28.2 45.1,15.5 53.5,28.2" fill="#58585d"/><path d="M1.2 11.4 H21 M3 17.4 H26.6 M6.8 23.4 H23" stroke="#2c2c32" stroke-width="5.4"/><path d="M3.2 11.4 H19 M5 17.4 H24.6 M8.8 23.4 H21" stroke="#7c7c80" stroke-width="2.2"/><circle cx="0.8" cy="11.4" r="0.9" fill="#5a5a5f"/><circle cx="5.8" cy="23.4" r="0.9" fill="#5a5a5f"/></svg>
<svg style="position:absolute;left:750px;top:1320px;" width="56" height="46" viewBox="0 0 56 46"><path d="M5.4 9.2 V40.3" stroke="#7c7c80" stroke-width="2"/><path d="M15.38 9.2 V40.3" stroke="#7c7c80" stroke-width="2"/><path d="M25.36 9.2 V40.3" stroke="#7c7c80" stroke-width="2"/><path d="M35.34 9.2 V40.3" stroke="#7c7c80" stroke-width="2"/><path d="M45.32 9.2 V40.3" stroke="#7c7c80" stroke-width="2"/><path d="M5.4 9.2 H45.3" stroke="#7c7c80" stroke-width="2"/><path d="M5.4 19.57 H45.3" stroke="#7c7c80" stroke-width="2"/><path d="M5.4 29.94 H45.3" stroke="#7c7c80" stroke-width="2"/><path d="M5.4 40.31 H45.3" stroke="#7c7c80" stroke-width="2"/><path d="M4.6 41.4 C22 39 26 12 46 8.8" fill="none" stroke="#2c2c32" stroke-width="7" stroke-linecap="round"/><path d="M4.6 41.4 C22 39 26 12 46 8.8" fill="none" stroke="#fff" stroke-width="4" stroke-linecap="round"/></svg>
<svg style="position:absolute;left:795px;top:1313px;" width="10" height="10" viewBox="0 0 10 10"><circle cx="4.9" cy="5" r="3.2" fill="#ff4434"/></svg>
<svg style="position:absolute;left:868px;top:1330px;" width="56" height="32" viewBox="0 0 56 32"><circle cx="28.4" cy="5.4" r="2.2" fill="#77777b"/><circle cx="28.4" cy="12.6" r="2.2" fill="#77777b"/><circle cx="28.4" cy="19.8" r="2.2" fill="#77777b"/><circle cx="28.4" cy="27" r="2.2" fill="#77777b"/><circle cx="35.6" cy="5.4" r="2.2" fill="#606065"/><circle cx="35.6" cy="12.6" r="2.2" fill="#606065"/><circle cx="35.6" cy="19.8" r="2.2" fill="#606065"/><circle cx="35.6" cy="27" r="2.2" fill="#606065"/><circle cx="42.8" cy="5.4" r="2.2" fill="#4c4c51"/><circle cx="42.8" cy="12.6" r="2.2" fill="#4c4c51"/><circle cx="42.8" cy="19.8" r="2.2" fill="#4c4c51"/><circle cx="42.8" cy="27" r="2.2" fill="#4c4c51"/><circle cx="50" cy="5.4" r="2.2" fill="#3a3a3f"/><circle cx="50" cy="12.6" r="2.2" fill="#3a3a3f"/><circle cx="50" cy="19.8" r="2.2" fill="#3a3a3f"/><circle cx="50" cy="27" r="2.2" fill="#3a3a3f"/><path d="M15.4 2.2 C19 8 26.6 13 26.6 20.4 A11.2 11.2 0 0 1 4.2 20.4 C4.2 13 11.8 8 15.4 2.2 Z" fill="#2c2c32" stroke="#7c7c80" stroke-width="2.2"/></svg>
<svg style="position:absolute;left:994px;top:1325px;" width="44" height="40" viewBox="0 0 44 40"><path d="M0.5 19.8 L10.7 2.7 L31.2 2.7 L41.5 19.8 L31.2 37.2 L10.7 37.2 Z" fill="#38383d" stroke="#7c7c80" stroke-width="1.5"/><path d="M21 19.8 L0.5 19.8 M21 19.8 L10.7 2.7 M21 19.8 L31.2 2.7 M21 19.8 L41.5 19.8 M21 19.8 L31.2 37.2 M21 19.8 L10.7 37.2 " stroke="#7c7c80" stroke-width="1.5"/><circle cx="0.5" cy="19.8" r="2.1" fill="#85858a"/><circle cx="10.7" cy="2.7" r="2.1" fill="#85858a"/><circle cx="31.2" cy="2.7" r="2.1" fill="#85858a"/><circle cx="41.5" cy="19.8" r="2.1" fill="#85858a"/><circle cx="31.2" cy="37.2" r="2.1" fill="#85858a"/><circle cx="10.7" cy="37.2" r="2.1" fill="#85858a"/><circle cx="10.75" cy="19.8" r="2.1" fill="#85858a"/><circle cx="15.85" cy="11.25" r="2.1" fill="#85858a"/><circle cx="26.1" cy="11.25" r="2.1" fill="#85858a"/><circle cx="31.25" cy="19.8" r="2.1" fill="#85858a"/><circle cx="26.1" cy="28.5" r="2.1" fill="#85858a"/><circle cx="15.85" cy="28.5" r="2.1" fill="#85858a"/><circle cx="21" cy="19.8" r="2.1" fill="#85858a"/></svg>
<svg style="position:absolute;left:1100px;top:1310px" width="80" height="70"><g transform="translate(35.6,35.8) scale(1.12) rotate(45 0 0)"><rect x="-3.1" y="-20.4" width="6.2" height="11" rx="2.6" fill="#85858a"/><rect x="-7.4" y="-10.6" width="14.8" height="3.3" rx="1.2" fill="#85858a"/><path d="M-2.8 -7.4 H2.8 V9 L1.2 15.6 H-1.2 L-2.8 9 Z" fill="#85858a"/><rect x="-0.8" y="15" width="1.6" height="5" fill="#85858a"/></g></svg>
<svg style="position:absolute;left:1230px;top:1324px;" width="50" height="44" viewBox="0 0 50 44"><ellipse cx="24" cy="21.4" rx="19.1" ry="15" fill="#3a3a3f" stroke="#7c7c80" stroke-width="2"/><circle cx="24" cy="6.4" r="3.7" fill="#2c2c32" stroke="#8c8c90" stroke-width="2"/><circle cx="24" cy="36.4" r="3.7" fill="#2c2c32" stroke="#8c8c90" stroke-width="2"/><circle cx="4.9" cy="21.4" r="3.7" fill="#2c2c32" stroke="#8c8c90" stroke-width="2"/><circle cx="43.1" cy="21.4" r="3.7" fill="#2c2c32" stroke="#8c8c90" stroke-width="2"/></svg>
<svg style="position:absolute;left:1350px;top:1326px;" width="52" height="40" viewBox="0 0 52 40"><path d="M3.2 12 V3.2 H12 M40 3.2 H48.8 V12 M48.8 28 V36.8 H40 M12 36.8 H3.2 V28" fill="none" stroke="#5a5a5f" stroke-width="2"/><circle cx="25.9" cy="20" r="11.2" fill="none" stroke="#7c7c80" stroke-width="2.6"/><circle cx="25.9" cy="20" r="2.1" fill="#7c7c80"/><path d="M25.9 3 V13 M25.9 27 V37 M9 20 H19 M33 20 H43" stroke="#7c7c80" stroke-width="2.4"/></svg>
<svg style="position:absolute;left:1466px;top:1324px;" width="58" height="44" viewBox="0 0 58 44"><rect x="3" y="3" width="4.4" height="4.4" fill="#55555a"/><rect x="3" y="11.8" width="4.4" height="4.4" fill="#55555a"/><rect x="3" y="20.6" width="4.4" height="4.4" fill="#55555a"/><rect x="3" y="29.4" width="4.4" height="4.4" fill="#55555a"/><rect x="7.4" y="7.4" width="4.4" height="4.4" fill="#55555a"/><rect x="7.4" y="16.2" width="4.4" height="4.4" fill="#55555a"/><rect x="7.4" y="25" width="4.4" height="4.4" fill="#55555a"/><rect x="11.8" y="3" width="4.4" height="4.4" fill="#55555a"/><rect x="11.8" y="11.8" width="4.4" height="4.4" fill="#55555a"/><rect x="11.8" y="20.6" width="4.4" height="4.4" fill="#55555a"/><rect x="11.8" y="29.4" width="4.4" height="4.4" fill="#55555a"/><rect x="16.2" y="7.4" width="4.4" height="4.4" fill="#55555a"/><rect x="16.2" y="16.2" width="4.4" height="4.4" fill="#55555a"/><rect x="16.2" y="25" width="4.4" height="4.4" fill="#55555a"/><rect x="20.6" y="3" width="4.4" height="4.4" fill="#55555a"/><rect x="20.6" y="11.8" width="4.4" height="4.4" fill="#55555a"/><rect x="20.6" y="20.6" width="4.4" height="4.4" fill="#55555a"/><rect x="20.6" y="29.4" width="4.4" height="4.4" fill="#55555a"/><rect x="25" y="7.4" width="4.4" height="4.4" fill="#55555a"/><rect x="25" y="16.2" width="4.4" height="4.4" fill="#55555a"/><rect x="25" y="25" width="4.4" height="4.4" fill="#55555a"/><rect x="29.4" y="3" width="4.4" height="4.4" fill="#55555a"/><rect x="29.4" y="11.8" width="4.4" height="4.4" fill="#55555a"/><rect x="29.4" y="20.6" width="4.4" height="4.4" fill="#55555a"/><rect x="29.4" y="29.4" width="4.4" height="4.4" fill="#55555a"/><rect x="33.8" y="7.4" width="4.4" height="4.4" fill="#55555a"/><rect x="33.8" y="16.2" width="4.4" height="4.4" fill="#55555a"/><rect x="33.8" y="25" width="4.4" height="4.4" fill="#55555a"/><rect x="38.2" y="3" width="4.4" height="4.4" fill="#55555a"/><rect x="38.2" y="11.8" width="4.4" height="4.4" fill="#55555a"/><rect x="38.2" y="20.6" width="4.4" height="4.4" fill="#55555a"/><rect x="38.2" y="29.4" width="4.4" height="4.4" fill="#55555a"/><rect x="42.6" y="7.4" width="4.4" height="4.4" fill="#55555a"/><rect x="42.6" y="16.2" width="4.4" height="4.4" fill="#55555a"/><rect x="42.6" y="25" width="4.4" height="4.4" fill="#55555a"/><rect x="13.6" y="11.6" width="41.2" height="28.7" rx="1.5" fill="#2c2c32" fill-opacity="0.55" stroke="#7c7c80" stroke-width="2.2"/><circle cx="32.9" cy="21" r="3.8" fill="#8c8c90"/><path d="M22.9 36.8 A10.2 9.4 0 0 1 43.2 36.8 Z" fill="#8c8c90"/></svg>
<svg style="position:absolute;left:1590px;top:1324px;" width="50" height="44" viewBox="0 0 50 44"><path d="M13.8 3 C16.4 8.4 22.4 13.4 22.4 20 A8.6 8.6 0 0 1 5.2 20 C5.2 13.4 11.2 8.4 13.8 3 Z" fill="#8a8a8e"/><circle cx="10.8" cy="21" r="2.6" fill="#707074" stroke="#6a6a6e" stroke-width="1"/><polygon points="32.2,14 45,38.9 19.3,38.9" fill="#8a8a8e"/><polygon points="33,22 33,36 40.4,36" fill="#6a6a6e"/></svg>
<svg style="position:absolute;left:1706px;top:1324px;" width="60" height="44" viewBox="0 0 60 44"><rect x="3" y="3" width="4.4" height="4.4" fill="#55555a"/><rect x="3" y="11.8" width="4.4" height="4.4" fill="#55555a"/><rect x="3" y="20.6" width="4.4" height="4.4" fill="#55555a"/><rect x="3" y="29.4" width="4.4" height="4.4" fill="#55555a"/><rect x="7.4" y="7.4" width="4.4" height="4.4" fill="#55555a"/><rect x="7.4" y="16.2" width="4.4" height="4.4" fill="#55555a"/><rect x="7.4" y="25" width="4.4" height="4.4" fill="#55555a"/><rect x="11.8" y="3" width="4.4" height="4.4" fill="#55555a"/><rect x="11.8" y="11.8" width="4.4" height="4.4" fill="#55555a"/><rect x="11.8" y="20.6" width="4.4" height="4.4" fill="#55555a"/><rect x="11.8" y="29.4" width="4.4" height="4.4" fill="#55555a"/><rect x="16.2" y="7.4" width="4.4" height="4.4" fill="#55555a"/><rect x="16.2" y="16.2" width="4.4" height="4.4" fill="#55555a"/><rect x="16.2" y="25" width="4.4" height="4.4" fill="#55555a"/><rect x="20.6" y="3" width="4.4" height="4.4" fill="#55555a"/><rect x="20.6" y="11.8" width="4.4" height="4.4" fill="#55555a"/><rect x="20.6" y="20.6" width="4.4" height="4.4" fill="#55555a"/><rect x="20.6" y="29.4" width="4.4" height="4.4" fill="#55555a"/><rect x="25" y="7.4" width="4.4" height="4.4" fill="#55555a"/><rect x="25" y="16.2" width="4.4" height="4.4" fill="#55555a"/><rect x="25" y="25" width="4.4" height="4.4" fill="#55555a"/><rect x="29.4" y="3" width="4.4" height="4.4" fill="#55555a"/><rect x="29.4" y="11.8" width="4.4" height="4.4" fill="#55555a"/><rect x="29.4" y="20.6" width="4.4" height="4.4" fill="#55555a"/><rect x="29.4" y="29.4" width="4.4" height="4.4" fill="#55555a"/><rect x="33.8" y="7.4" width="4.4" height="4.4" fill="#55555a"/><rect x="33.8" y="16.2" width="4.4" height="4.4" fill="#55555a"/><rect x="33.8" y="25" width="4.4" height="4.4" fill="#55555a"/><rect x="38.2" y="3" width="4.4" height="4.4" fill="#55555a"/><rect x="38.2" y="11.8" width="4.4" height="4.4" fill="#55555a"/><rect x="38.2" y="20.6" width="4.4" height="4.4" fill="#55555a"/><rect x="38.2" y="29.4" width="4.4" height="4.4" fill="#55555a"/><rect x="42.6" y="7.4" width="4.4" height="4.4" fill="#55555a"/><rect x="42.6" y="16.2" width="4.4" height="4.4" fill="#55555a"/><rect x="42.6" y="25" width="4.4" height="4.4" fill="#55555a"/><rect x="13" y="11.2" width="42" height="29.5" rx="2.5" fill="#505055"/><path d="M15.5 11.2 H44.5 L22 40.7 H15.5 Q13 40.7 13 38.2 V13.7 Q13 11.2 15.5 11.2 Z" fill="#9a9a9e"/><circle cx="34" cy="26" r="7.3" fill="#1a1a1c"/></svg>
<svg style="position:absolute;left:1826px;top:1324px;" width="56" height="44" viewBox="0 0 56 44"><rect x="9.3" y="5.8" width="39.1" height="30.2" fill="#3e3e43" stroke="#a8a8ac" stroke-width="2" stroke-dasharray="2 2"/><rect x="0" y="14" width="22" height="26" fill="#2c2c32"/><rect x="36" y="0" width="20" height="22" fill="#2c2c32"/><rect x="9.3" y="5.8" width="39.1" height="30.2" fill="#3e3e43"/><path d="M9.3 6 V36 H48.4 M48.4 36 V5.8 H9.3" fill="none" stroke="#a8a8ac" stroke-width="2" stroke-dasharray="2 2" /><path d="M38 5.8 H42 Q47.6 5.8 47.6 11.4 V17" fill="none" stroke="#9a9a9e" stroke-width="2.4"/><path d="M42.4 12.4 L47.6 18 L52.8 12.4" fill="none" stroke="#9a9a9e" stroke-width="2.4"/><path d="M19.6 36 H15.6 Q10 36 10 30.4 V24.8" fill="none" stroke="#9a9a9e" stroke-width="2.4"/><path d="M4.8 29.4 L10 23.8 L15.2 29.4" fill="none" stroke="#9a9a9e" stroke-width="2.4"/></svg>
<svg style="position:absolute;left:1950px;top:1326px;" width="50" height="42" viewBox="0 0 50 42"><rect x="8" y="8" width="38" height="28" rx="4" fill="none" stroke="#5a5a5f" stroke-width="1.8"/><rect x="3.6" y="3.8" width="38.8" height="28.7" rx="4" fill="#2c2c32" stroke="#707074" stroke-width="2"/></svg>
<div class="t" style="left:1962.4px;top:1334.0px;font-size:20px;line-height:22px;color:#8a8a8e;letter-spacing:0.35px;">3D</div>
<svg style="position:absolute;left:3520px;top:1326px;" width="56" height="38" viewBox="0 0 56 38"><path d="M15.9 4.7 L29.2 18 L15.9 31.3 L2.6 18 Z" fill="none" stroke="#3e3e43" stroke-width="1.8"/><path d="M25.7 4.7 L39 18 L25.7 31.3 L12.4 18 Z" fill="#2c2c32" stroke="#4c4c51" stroke-width="1.8"/><path d="M36.2 4.7 L49.5 18 L36.2 31.3 L22.9 18 Z" fill="#68686c" stroke="#7c7c80" stroke-width="1.8"/><path d="M3 18 H22 M30 18 H42" stroke="#4c4c51" stroke-width="1.2"/></svg>
<svg style="position:absolute;left:3644px;top:1324px;" width="48" height="40" viewBox="0 0 48 40"><path d="M9.2 25.6 L13.6 11.6 L18.2 30.6 L23.8 20 L26.6 27 L31.4 13 L36.4 32 L42.4 22.8 V31.6 H9.2 Z" fill="#6a6a6f"/><path d="M3.7 4.9 V36 H43.1" fill="none" stroke="#fff" stroke-width="2.6"/><path d="M9.2 25.6 L13.6 11.6 L18.2 30.6 L23.8 20 L26.6 27 L31.4 13 L36.4 32 L42.4 22.8" fill="none" stroke="#fff" stroke-width="2.6" stroke-linejoin="round"/></svg>
<svg style="position:absolute;left:3766px;top:1324px;" width="42" height="42" viewBox="0 0 42 42"><circle cx="21" cy="20.9" r="16.8" fill="none" stroke="#7c7c80" stroke-width="2.6"/><circle cx="21" cy="12.6" r="3" fill="#8a8a8e"/><rect x="19" y="18.8" width="4" height="11.4" rx="2" fill="#8a8a8e"/></svg>
<!-- p05_curves.py -->
<div class="t" style="left:14.9px;top:1392.0px;font-size:26px;line-height:30px;color:#fff;letter-spacing:0.64px;-webkit-text-stroke:0.73px #fff;">Curves - Custom</div>
<div style="position:absolute;left:1285.3px;top:1383px;width:2px;height:46px;background:#0b0b0c;"></div>
<svg style="position:absolute;left:1305px;top:1391px;" width="38" height="30" viewBox="0 0 38 30"><rect x="2.4" y="2.5" width="31.4" height="23.2" rx="2.5" fill="#333338" stroke="#fff" stroke-width="2.6"/><path d="M8.6 19.4 L27.4 9.2" stroke="#d8d8d8" stroke-width="1.6"/><circle cx="8.6" cy="19.4" r="2" fill="#fff"/><circle cx="27.4" cy="9.2" r="2" fill="#fff"/></svg>
<svg style="position:absolute;left:1358px;top:1391px;" width="44" height="30" viewBox="0 0 44 30"><circle cx="28" cy="14.2" r="8.4" fill="none" stroke="#55555a" stroke-width="6" stroke-dasharray="5 1.6"/><circle cx="14.1" cy="14.2" r="8.4" fill="none" stroke="#77777b" stroke-width="6" stroke-dasharray="5 1.6"/></svg>
<svg style="position:absolute;left:1414px;top:1391px;" width="48" height="30" viewBox="0 0 48 30"><path d="M31.3 3.4 C33.7 8 38.9 11.6 38.9 17.4 A7.6 7.6 0 0 1 23.7 17.4 C23.7 11.6 28.9 8 31.3 3.4 Z" fill="none" stroke="#55555a" stroke-width="2"/><circle cx="14.9" cy="14.2" r="11" fill="#28282d"/><circle cx="14.9" cy="14.2" r="8.4" fill="none" stroke="#77777b" stroke-width="6" stroke-dasharray="5 1.6"/></svg>
<svg style="position:absolute;left:1470px;top:1391px;" width="48" height="30" viewBox="0 0 48 30"><circle cx="29.5" cy="14.2" r="4.6" fill="#55555a"/><path d="M36.5 14.2 L40.9 14.2" stroke="#55555a" stroke-width="1.8"/><path d="M34.4497 19.1497 L37.561 22.261" stroke="#55555a" stroke-width="1.8"/><path d="M29.5 21.2 L29.5 25.6" stroke="#55555a" stroke-width="1.8"/><path d="M24.5503 19.1497 L21.439 22.261" stroke="#55555a" stroke-width="1.8"/><path d="M22.5 14.2 L18.1 14.2" stroke="#55555a" stroke-width="1.8"/><path d="M24.5503 9.25025 L21.439 6.13898" stroke="#55555a" stroke-width="1.8"/><path d="M29.5 7.2 L29.5 2.8" stroke="#55555a" stroke-width="1.8"/><path d="M34.4497 9.25025 L37.561 6.13898" stroke="#55555a" stroke-width="1.8"/><circle cx="14.4" cy="14.2" r="11" fill="#28282d"/><circle cx="14.4" cy="14.2" r="8.4" fill="none" stroke="#77777b" stroke-width="6" stroke-dasharray="5 1.6"/></svg>
<svg style="position:absolute;left:1526px;top:1391px;" width="48" height="30" viewBox="0 0 48 30"><path d="M30.3 3.4 C32.7 8 37.9 11.6 37.9 17.4 A7.6 7.6 0 0 1 22.7 17.4 C22.7 11.6 27.9 8 30.3 3.4 Z" fill="none" stroke="#55555a" stroke-width="2"/><circle cx="15.2" cy="14.2" r="12.4" fill="#28282d"/><circle cx="15.2" cy="14.2" r="4.6" fill="#77777b"/><path d="M22.2 14.2 L26.6 14.2" stroke="#77777b" stroke-width="1.8"/><path d="M20.1497 19.1497 L23.261 22.261" stroke="#77777b" stroke-width="1.8"/><path d="M15.2 21.2 L15.2 25.6" stroke="#77777b" stroke-width="1.8"/><path d="M10.2503 19.1497 L7.13898 22.261" stroke="#77777b" stroke-width="1.8"/><path d="M8.2 14.2 L3.8 14.2" stroke="#77777b" stroke-width="1.8"/><path d="M10.2503 9.25025 L7.13898 6.13898" stroke="#77777b" stroke-width="1.8"/><path d="M15.2 7.2 L15.2 2.8" stroke="#77777b" stroke-width="1.8"/><path d="M20.1497 9.25025 L23.261 6.13898" stroke="#77777b" stroke-width="1.8"/></svg>
<svg style="position:absolute;left:1582px;top:1391px;" width="48" height="30" viewBox="0 0 48 30"><path d="M28.6 3.4 C31 8 36.2 11.6 36.2 17.4 A7.6 7.6 0 0 1 21 17.4 C21 11.6 26.2 8 28.6 3.4 Z" fill="none" stroke="#55555a" stroke-width="2"/><path d="M14.7 3.4 C17.1 8 22.3 11.6 22.3 17.4 A7.6 7.6 0 0 1 7.1 17.4 C7.1 11.6 12.3 8 14.7 3.4 Z" fill="#28282d"/><path d="M14.7 3.4 C17.1 8 22.3 11.6 22.3 17.4 A7.6 7.6 0 0 1 7.1 17.4 C7.1 11.6 12.3 8 14.7 3.4 Z" fill="none" stroke="#77777b" stroke-width="2"/></svg>
<svg style="position:absolute;left:1638px;top:1391px;" width="48" height="30" viewBox="0 0 48 30"><circle cx="29.3" cy="14.2" r="4.6" fill="#55555a"/><path d="M36.3 14.2 L40.7 14.2" stroke="#55555a" stroke-width="1.8"/><path d="M34.2497 19.1497 L37.361 22.261" stroke="#55555a" stroke-width="1.8"/><path d="M29.3 21.2 L29.3 25.6" stroke="#55555a" stroke-width="1.8"/><path d="M24.3503 19.1497 L21.239 22.261" stroke="#55555a" stroke-width="1.8"/><path d="M22.3 14.2 L17.9 14.2" stroke="#55555a" stroke-width="1.8"/><path d="M24.3503 9.25025 L21.239 6.13898" stroke="#55555a" stroke-width="1.8"/><path d="M29.3 7.2 L29.3 2.8" stroke="#55555a" stroke-width="1.8"/><path d="M34.2497 9.25025 L37.361 6.13898" stroke="#55555a" stroke-width="1.8"/><path d="M15 1 C18 8 25 11.6 25 17.4 A10 10 0 0 1 5 17.4 C5 11.6 12 8 15 1 Z" fill="#28282d"/><path d="M15 3.4 C17.4 8 22.6 11.6 22.6 17.4 A7.6 7.6 0 0 1 7.4 17.4 C7.4 11.6 12.6 8 15 3.4 Z" fill="none" stroke="#77777b" stroke-width="2"/></svg>
<div style="position:absolute;left:1697.9px;top:1383px;width:2px;height:46px;background:#0b0b0c;"></div>
<svg style="position:absolute;left:1723px;top:1393.2px;" width="24" height="24" viewBox="0 0 24 24"><g fill="none" stroke="#808084" stroke-width="2.9"><path d="M1.5 8 V1.5 H8 M2 2 L9.5 9.5 M16 1.5 H22.5 V8 M22 2 L14.5 9.5 M22.5 16 V22.5 H16 M22 22 L14.5 14.5 M8 22.5 H1.5 V16 M2 22 L9.5 14.5"/></g></svg>
<div style="position:absolute;left:1771px;top:1383px;width:2px;height:46px;background:#0b0b0c;"></div>
<svg style="position:absolute;left:1790px;top:1386px;" width="40" height="40" viewBox="0 0 40 40"><g transform="translate(20,20)"><path d="M-14.6 -1.5 L-6.2 -9.56 A11.4 11.4 0 1 1 -11.3 1.6" fill="none" stroke="#969696" stroke-width="2.3"/><path d="M-14.7 -10.6 V-1.4 H-6" fill="none" stroke="#969696" stroke-width="2.3"/><path d="M0 -5.6 V5.6 M-5.6 0 H5.6" stroke="#969696" stroke-width="2.2"/></g></svg>
<div style="position:absolute;left:1845px;top:1383px;width:2px;height:46px;background:#0b0b0c;"></div>
<svg style="position:absolute;left:1862px;top:1398.4px;" width="42" height="14" viewBox="0 0 42 14"><circle cx="6.8" cy="6.9" r="3.7" fill="#8c8c8c"/><circle cx="20.9" cy="6.9" r="3.7" fill="#8c8c8c"/><circle cx="35" cy="6.9" r="3.7" fill="#8c8c8c"/></svg>
<div style="position:absolute;left:1919px;top:1383px;width:2px;height:46px;background:#0b0b0c;"></div>
<div class="t" style="left:1940.6px;top:1392.0px;font-size:26px;line-height:30px;color:#fff;letter-spacing:0.01px;-webkit-text-stroke:0.73px #fff;">Scopes</div>
<div class="t" style="left:3485.4px;top:1392.0px;font-size:26px;line-height:30px;color:#fff;letter-spacing:0.84px;-webkit-text-stroke:0.73px #fff;">Parade</div>
<svg style="position:absolute;left:3586.05px;top:1400.2px;" width="20.5" height="14" viewBox="0 0 20.5 14"><path d="M2 2 L10.25 12 L18.5 2" fill="none" stroke="#8c8c8c" stroke-width="2.6" stroke-linecap="butt" stroke-linejoin="miter"/></svg>
<div style="position:absolute;left:3623.2px;top:1383px;width:2px;height:46px;background:#0b0b0c;"></div>
<svg style="position:absolute;left:3643px;top:1389.4px;" width="36" height="34" viewBox="0 0 36 34"><g stroke="#7c7c80" stroke-width="2" fill="#28282d"><path d="M2 6.4 H33.6 M2 17 H33.6 M2 27.6 H33.6"/><circle cx="23.6" cy="6.4" r="3.6"/><circle cx="11.6" cy="17" r="3.6"/><circle cx="23.6" cy="27.6" r="3.6"/></g></svg>
<div style="position:absolute;left:3696.9px;top:1383px;width:2px;height:46px;background:#0b0b0c;"></div>
<svg style="position:absolute;left:3723px;top:1393.2px;" width="24" height="24" viewBox="0 0 24 24"><g fill="none" stroke="#808084" stroke-width="2.9"><path d="M1.5 8 V1.5 H8 M2 2 L9.5 9.5 M16 1.5 H22.5 V8 M22 2 L14.5 9.5 M22.5 16 V22.5 H16 M22 22 L14.5 14.5 M8 22.5 H1.5 V16 M2 22 L9.5 14.5"/></g></svg>
<div style="position:absolute;left:3771.4px;top:1383px;width:2px;height:46px;background:#0b0b0c;"></div>
<svg style="position:absolute;left:3788px;top:1398.4px;" width="42" height="14" viewBox="0 0 42 14"><circle cx="6.8" cy="6.9" r="3.7" fill="#8c8c8c"/><circle cx="20.9" cy="6.9" r="3.7" fill="#8c8c8c"/><circle cx="35" cy="6.9" r="3.7" fill="#8c8c8c"/></svg>
<svg style="position:absolute;left:36.2px;top:1472.1px;" width="1357.8" height="479.8" viewBox="0 0 1357.8 479.8"><rect x="0" y="0" width="1357.8" height="479.8" fill="#2a2a30"/><path d="M54.40 0 V479.8" stroke="#37373c" stroke-width="1.4"/><path d="M108.80 0 V479.8" stroke="#37373c" stroke-width="1.4"/><path d="M163.20 0 V479.8" stroke="#37373c" stroke-width="1.4"/><path d="M217.60 0 V479.8" stroke="#37373c" stroke-width="1.4"/><path d="M272.00 0 V479.8" stroke="#47474c" stroke-width="1.8"/><path d="M326.40 0 V479.8" stroke="#37373c" stroke-width="1.4"/><path d="M380.80 0 V479.8" stroke="#37373c" stroke-width="1.4"/><path d="M435.20 0 V479.8" stroke="#37373c" stroke-width="1.4"/><path d="M489.60 0 V479.8" stroke="#37373c" stroke-width="1.4"/><path d="M544.00 0 V479.8" stroke="#47474c" stroke-width="1.8"/><path d="M598.40 0 V479.8" stroke="#37373c" stroke-width="1.4"/><path d="M652.80 0 V479.8" stroke="#37373c" stroke-width="1.4"/><path d="M707.20 0 V479.8" stroke="#37373c" stroke-width="1.4"/><path d="M761.60 0 V479.8" stroke="#37373c" stroke-width="1.4"/><path d="M816.00 0 V479.8" stroke="#47474c" stroke-width="1.8"/><path d="M870.40 0 V479.8" stroke="#37373c" stroke-width="1.4"/><path d="M924.80 0 V479.8" stroke="#37373c" stroke-width="1.4"/><path d="M979.20 0 V479.8" stroke="#37373c" stroke-width="1.4"/><path d="M1033.60 0 V479.8" stroke="#37373c" stroke-width="1.4"/><path d="M1088.00 0 V479.8" stroke="#47474c" stroke-width="1.8"/><path d="M1142.40 0 V479.8" stroke="#37373c" stroke-width="1.4"/><path d="M1196.80 0 V479.8" stroke="#37373c" stroke-width="1.4"/><path d="M1251.20 0 V479.8" stroke="#37373c" stroke-width="1.4"/><path d="M1305.60 0 V479.8" stroke="#37373c" stroke-width="1.4"/><path d="M0 19.30 H1357.8" stroke="#37373c" stroke-width="1.4"/><path d="M0 38.60 H1357.8" stroke="#37373c" stroke-width="1.4"/><path d="M0 57.90 H1357.8" stroke="#37373c" stroke-width="1.4"/><path d="M0 77.20 H1357.8" stroke="#37373c" stroke-width="1.4"/><path d="M0 96.50 H1357.8" stroke="#47474c" stroke-width="1.8"/><path d="M0 115.80 H1357.8" stroke="#37373c" stroke-width="1.4"/><path d="M0 135.10 H1357.8" stroke="#37373c" stroke-width="1.4"/><path d="M0 154.40 H1357.8" stroke="#37373c" stroke-width="1.4"/><path d="M0 173.70 H1357.8" stroke="#37373c" stroke-width="1.4"/><path d="M0 193.00 H1357.8" stroke="#47474c" stroke-width="1.8"/><path d="M0 212.30 H1357.8" stroke="#37373c" stroke-width="1.4"/><path d="M0 231.60 H1357.8" stroke="#37373c" stroke-width="1.4"/><path d="M0 250.90 H1357.8" stroke="#37373c" stroke-width="1.4"/><path d="M0 270.20 H1357.8" stroke="#37373c" stroke-width="1.4"/><path d="M0 289.50 H1357.8" stroke="#47474c" stroke-width="1.8"/><path d="M0 308.80 H1357.8" stroke="#37373c" stroke-width="1.4"/><path d="M0 328.10 H1357.8" stroke="#37373c" stroke-width="1.4"/><path d="M0 347.40 H1357.8" stroke="#37373c" stroke-width="1.4"/><path d="M0 366.70 H1357.8" stroke="#37373c" stroke-width="1.4"/><path d="M0 386.00 H1357.8" stroke="#47474c" stroke-width="1.8"/><path d="M0 405.30 H1357.8" stroke="#37373c" stroke-width="1.4"/><path d="M0 424.60 H1357.8" stroke="#37373c" stroke-width="1.4"/><path d="M0 443.90 H1357.8" stroke="#37373c" stroke-width="1.4"/><path d="M0 463.20 H1357.8" stroke="#37373c" stroke-width="1.4"/><rect x="0" y="0" width="1357.8" height="479.8" fill="none" stroke="#0c0c0e" stroke-width="1.9"/><polygon points="10.8,467.3 263.8,467.3 293.8,466.7 443.8,467.3 447.8,465.7 453.8,467.3 508.8,467.3 513.8,466.3 523.8,467.3 535.8,466.3 543.8,467.3 583.8,467.3 591.8,466.3 603.8,467.3 611.8,466.7 615.8,465.3 621.8,462.3 627.8,459.7 635.8,458.7 641.8,457.9 646.8,453.8 652.6,446.3 657.3,74.1 658.5,74.1 663.2,465.9 664.4,467.7 677.4,467.7 679.0,465.7 683.3,9.3 684.4,9.3 689.2,462.3 690.8,464.7 697.8,465.9 708.8,466.9 735.8,467.3 1344.8,467.3 1344.8,468.3 10.8,468.3" fill="#4a4a50" fill-opacity="0.8"/><polyline points="10.8,467.3 263.8,467.3 293.8,466.7 443.8,467.3 447.8,465.7 453.8,467.3 508.8,467.3 513.8,466.3 523.8,467.3 535.8,466.3 543.8,467.3 583.8,467.3 591.8,466.3 603.8,467.3 611.8,466.7 615.8,465.3 621.8,462.3 627.8,459.7 635.8,458.7 641.8,457.9 646.8,453.8 652.6,446.3 657.3,74.1 658.5,74.1 663.2,465.9 664.4,467.7 677.4,467.7 679.0,465.7 683.3,9.3 684.4,9.3 689.2,462.3 690.8,464.7 697.8,465.9 708.8,466.9 735.8,467.3 1344.8,467.3" fill="none" stroke="#aaa2a0" stroke-width="2" stroke-linejoin="round"/><path d="M10.8 468.3 L1346.4 11.1" stroke="#1d1d20" stroke-width="5" stroke-opacity="0.55"/><path d="M10.8 468.3 L1346.4 11.1" stroke="#f4ece4" stroke-width="2.4"/><circle cx="11.0" cy="468.5" r="8.4" fill="#efebea" stroke="#111113" stroke-width="1.6"/><circle cx="1346.4" cy="11.1" r="8.4" fill="#efebea" stroke="#111113" stroke-width="1.6"/><circle cx="678.4" cy="238.9" r="9.6" fill="none" stroke="#111113" stroke-width="1.4"/><circle cx="678.4" cy="238.9" r="7.2" fill="#2a2a2f" stroke="#f2f0f0" stroke-width="3.6"/><path d="M-15.4 -1.6 H-3.4 L10.6 12 L-3.4 25.4 H-11 Q-15.4 25.4 -15.4 21 V2.8 Q-15.4 -1.6 -11 -1.6 Z" fill="#efebea" stroke="#050506" stroke-width="2.6" stroke-linejoin="round"/></svg>
<div class="t" style="left:1475.8px;top:1481.0px;font-size:27px;line-height:30px;color:#f2f2f2;letter-spacing:0.36px;">Edit</div>
<svg style="position:absolute;left:1583.4px;top:1476.2px;" width="36" height="36" viewBox="0 0 36 36"><g transform="translate(18,18) rotate(-40) scale(0.86)"><rect x="-13.2" y="-5.2" width="15.4" height="10.4" rx="5.2" fill="none" stroke="#26262b" stroke-width="6.4"/><rect x="-2.2" y="-5.2" width="15.4" height="10.4" rx="5.2" fill="none" stroke="#26262b" stroke-width="6.4"/><rect x="-13.2" y="-5.2" width="15.4" height="10.4" rx="5.2" fill="none" stroke="#fff" stroke-width="3.4"/><path d="M-2.2 0 A5.2 5.2 0 0 1 3 -5.2 H8 A5.2 5.2 0 0 1 8 5.2 H4.6" fill="none" stroke="#26262b" stroke-width="6.4"/><path d="M-2.2 0 A5.2 5.2 0 0 1 3 -5.2 H8 A5.2 5.2 0 0 1 8 5.2 H4.6" fill="none" stroke="#fff" stroke-width="3.4"/></g></svg>
<div style="position:absolute;left:1623px;top:1473px;width:44px;height:44px;background:#efebea;border-radius:6px;"></div><div class="t" style="left:1636.5px;top:1481.0px;font-size:25px;line-height:28px;color:#2a2a2e;letter-spacing:0.00px;-webkit-text-stroke:0.70px #2a2a2e;">Y</div>
<div style="position:absolute;left:1669px;top:1473px;width:44px;height:44px;background:#ff1919;border-radius:6px;"></div><div class="t" style="left:1682.6px;top:1481.0px;font-size:25px;line-height:28px;color:#5c1414;letter-spacing:0.00px;-webkit-text-stroke:0.70px #5c1414;">R</div>
<div style="position:absolute;left:1715px;top:1473px;width:44px;height:44px;background:#18d720;border-radius:6px;"></div><div class="t" style="left:1728.3px;top:1481.0px;font-size:25px;line-height:28px;color:#1c5a20;letter-spacing:0.00px;-webkit-text-stroke:0.70px #1c5a20;">G</div>
<div style="position:absolute;left:1763px;top:1473px;width:44px;height:44px;background:#0a41ff;border-radius:6px;"></div><div class="t" style="left:1776.7px;top:1481.0px;font-size:25px;line-height:28px;color:#18226c;letter-spacing:0.00px;-webkit-text-stroke:0.70px #18226c;">B</div>
<svg style="position:absolute;left:1841.6px;top:1474.1px;" width="40" height="40" viewBox="0 0 40 40"><g transform="translate(20,20)"><path d="M-14.6 -1.5 L-6.2 -9.56 A11.4 11.4 0 1 1 -11.3 1.6" fill="none" stroke="#969696" stroke-width="2.4"/><path d="M-14.7 -10.6 V-1.4 H-6" fill="none" stroke="#969696" stroke-width="2.4"/></g></svg>
<div style="position:absolute;left:1485px;top:1555.1px;width:186px;height:5.4px;background:#1b1b1d;border-radius:3px;box-shadow:0 1px 0 #38383d;"></div>
<svg style="position:absolute;left:1660px;top:1545.8px;" width="24" height="24" viewBox="0 0 24 24"><circle cx="12.1" cy="12" r="10.2" fill="#18181a"/><circle cx="12.1" cy="12" r="8.9" fill="#dedcd8"/></svg>
<svg style="position:absolute;left:1841.6px;top:1536px;" width="40" height="40" viewBox="0 0 40 40"><g transform="translate(20,20)"><path d="M-14.6 -1.5 L-6.2 -9.56 A11.4 11.4 0 1 1 -11.3 1.6" fill="none" stroke="#969696" stroke-width="2.4"/><path d="M-14.7 -10.6 V-1.4 H-6" fill="none" stroke="#969696" stroke-width="2.4"/></g></svg>
<div style="position:absolute;left:1485px;top:1599.4px;width:186px;height:5.4px;background:#1b1b1d;border-radius:3px;box-shadow:0 1px 0 #38383d;"></div>
<svg style="position:absolute;left:1660px;top:1590.1px;" width="24" height="24" viewBox="0 0 24 24"><circle cx="12.1" cy="12" r="10.2" fill="#18181a"/><circle cx="12.1" cy="12" r="8.9" fill="#e8061e"/></svg>
<svg style="position:absolute;left:1841.6px;top:1581.8px;" width="40" height="40" viewBox="0 0 40 40"><g transform="translate(20,20)"><path d="M-14.6 -1.5 L-6.2 -9.56 A11.4 11.4 0 1 1 -11.3 1.6" fill="none" stroke="#969696" stroke-width="2.4"/><path d="M-14.7 -10.6 V-1.4 H-6" fill="none" stroke="#969696" stroke-width="2.4"/></g></svg>
<div style="position:absolute;left:1485px;top:1645.2px;width:186px;height:5.4px;background:#1b1b1d;border-radius:3px;box-shadow:0 1px 0 #38383d;"></div>
<svg style="position:absolute;left:1660px;top:1635.9px;" width="24" height="24" viewBox="0 0 24 24"><circle cx="12.1" cy="12" r="10.2" fill="#18181a"/><circle cx="12.1" cy="12" r="8.9" fill="#2ec022"/></svg>
<svg style="position:absolute;left:1841.6px;top:1626.6px;" width="40" height="40" viewBox="0 0 40 40"><g transform="translate(20,20)"><path d="M-14.6 -1.5 L-6.2 -9.56 A11.4 11.4 0 1 1 -11.3 1.6" fill="none" stroke="#969696" stroke-width="2.4"/><path d="M-14.7 -10.6 V-1.4 H-6" fill="none" stroke="#969696" stroke-width="2.4"/></g></svg>
<div style="position:absolute;left:1485px;top:1689.5px;width:186px;height:5.4px;background:#1b1b1d;border-radius:3px;box-shadow:0 1px 0 #38383d;"></div>
<svg style="position:absolute;left:1660px;top:1680.2px;" width="24" height="24" viewBox="0 0 24 24"><circle cx="12.1" cy="12" r="10.2" fill="#18181a"/><circle cx="12.1" cy="12" r="8.9" fill="#0a48ff"/></svg>
<svg style="position:absolute;left:1841.6px;top:1672.4px;" width="40" height="40" viewBox="0 0 40 40"><g transform="translate(20,20)"><path d="M-14.6 -1.5 L-6.2 -9.56 A11.4 11.4 0 1 1 -11.3 1.6" fill="none" stroke="#969696" stroke-width="2.4"/><path d="M-14.7 -10.6 V-1.4 H-6" fill="none" stroke="#969696" stroke-width="2.4"/></g></svg>
<div style="position:absolute;left:1700px;top:1530px;width:110px;height:178.5px;overflow:hidden">
<div style="position:absolute;left:3px;top:9.3px;width:96px;height:39.9px;background:#212123;border:2px solid #0d0d0f;box-sizing:border-box;border-radius:5px;"></div>
<div class="t" style="left:26.6px;top:15.0px;font-size:26px;line-height:30px;color:#fff;letter-spacing:0.51px;">100</div>
<div style="position:absolute;left:3px;top:55.2px;width:96px;height:39.9px;background:#212123;border:2px solid #0d0d0f;box-sizing:border-box;border-radius:5px;"></div>
<div class="t" style="left:26.6px;top:61.0px;font-size:26px;line-height:30px;color:#fff;letter-spacing:0.51px;">100</div>
<div style="position:absolute;left:3px;top:99.6px;width:96px;height:39.9px;background:#212123;border:2px solid #0d0d0f;box-sizing:border-box;border-radius:5px;"></div>
<div class="t" style="left:26.6px;top:105.0px;font-size:26px;line-height:30px;color:#fff;letter-spacing:0.51px;">100</div>
<div style="position:absolute;left:3px;top:145.3px;width:96px;height:39.9px;background:#212123;border:2px solid #0d0d0f;box-sizing:border-box;border-radius:5px;"></div>
<div class="t" style="left:26.6px;top:151.0px;font-size:26px;line-height:30px;color:#fff;letter-spacing:0.51px;">100</div>
</div>
<div style="position:absolute;left:1477px;top:1728.7px;width:402px;height:2.4px;background:#101012;"></div>
<div class="t" style="left:1476.4px;top:1761.0px;font-size:27px;line-height:30px;color:#f2f2f2;letter-spacing:-0.12px;">Soft Clip</div>
<svg style="position:absolute;left:1607.6px;top:1756px;" width="36" height="36" viewBox="0 0 36 36"><g transform="translate(18,18) rotate(-40) scale(0.86)"><rect x="-13.2" y="-5.2" width="15.4" height="10.4" rx="5.2" fill="none" stroke="#26262b" stroke-width="6.4"/><rect x="-2.2" y="-5.2" width="15.4" height="10.4" rx="5.2" fill="none" stroke="#26262b" stroke-width="6.4"/><rect x="-13.2" y="-5.2" width="15.4" height="10.4" rx="5.2" fill="none" stroke="#fff" stroke-width="3.4"/><path d="M-2.2 0 A5.2 5.2 0 0 1 3 -5.2 H8 A5.2 5.2 0 0 1 8 5.2 H4.6" fill="none" stroke="#26262b" stroke-width="6.4"/><path d="M-2.2 0 A5.2 5.2 0 0 1 3 -5.2 H8 A5.2 5.2 0 0 1 8 5.2 H4.6" fill="none" stroke="#fff" stroke-width="3.4"/></g></svg>
<div style="position:absolute;left:1647px;top:1753px;width:44px;height:44px;background:#ff1919;border-radius:6px;"></div><div class="t" style="left:1660.6px;top:1761.0px;font-size:25px;line-height:28px;color:#5c1414;letter-spacing:0.00px;-webkit-text-stroke:0.70px #5c1414;">R</div>
<div style="position:absolute;left:1701px;top:1753px;width:44px;height:44px;background:#18d720;border-radius:6px;"></div><div class="t" style="left:1714.3px;top:1761.0px;font-size:25px;line-height:28px;color:#1c5a20;letter-spacing:0.00px;-webkit-text-stroke:0.70px #1c5a20;">G</div>
<div style="position:absolute;left:1755px;top:1753px;width:44px;height:44px;background:#0a41ff;border-radius:6px;"></div><div class="t" style="left:1768.7px;top:1761.0px;font-size:25px;line-height:28px;color:#18226c;letter-spacing:0.00px;-webkit-text-stroke:0.70px #18226c;">B</div>
<svg style="position:absolute;left:1841.2px;top:1753.8px;" width="40" height="40" viewBox="0 0 40 40"><g transform="translate(20,20)"><path d="M-14.6 -1.5 L-6.2 -9.56 A11.4 11.4 0 1 1 -11.3 1.6" fill="none" stroke="#969696" stroke-width="2.4"/><path d="M-14.7 -10.6 V-1.4 H-6" fill="none" stroke="#969696" stroke-width="2.4"/></g></svg>
<div class="t" style="left:1497.6px;top:1847.0px;font-size:27px;line-height:30px;color:#8c8c8c;letter-spacing:0.36px;">Low</div>
<div style="position:absolute;left:1569px;top:1841.3px;width:72px;height:39.3px;background:#212123;border:2px solid #0d0d0f;box-sizing:border-box;border-radius:5px;"></div>
<div class="t" style="left:1577.4px;top:1847.0px;font-size:26px;line-height:30px;color:#fff;letter-spacing:0.38px;">50.0</div>
<div class="t" style="left:1684.2px;top:1847.0px;font-size:27px;line-height:30px;color:#8c8c8c;letter-spacing:0.48px;">High</div>
<div style="position:absolute;left:1761px;top:1841.3px;width:72px;height:39.3px;background:#212123;border:2px solid #0d0d0f;box-sizing:border-box;border-radius:5px;"></div>
<div class="t" style="left:1769.4px;top:1847.0px;font-size:26px;line-height:30px;color:#fff;letter-spacing:0.28px;">50.0</div>
<div class="t" style="left:1497.6px;top:1897.0px;font-size:27px;line-height:30px;color:#8c8c8c;letter-spacing:-1.22px;">L.S.</div>
<div style="position:absolute;left:1569px;top:1891.4px;width:72px;height:39.3px;background:#212123;border:2px solid #0d0d0f;box-sizing:border-box;border-radius:5px;"></div>
<div class="t" style="left:1584.6px;top:1897.0px;font-size:26px;line-height:30px;color:#fff;letter-spacing:0.24px;">0.0</div>
<div class="t" style="left:1684.2px;top:1897.0px;font-size:27px;line-height:30px;color:#8c8c8c;letter-spacing:-1.08px;">H.S.</div>
<div style="position:absolute;left:1761px;top:1891.4px;width:72px;height:39.3px;background:#212123;border:2px solid #0d0d0f;box-sizing:border-box;border-radius:5px;"></div>
<div class="t" style="left:1776.6px;top:1897.0px;font-size:26px;line-height:30px;color:#fff;letter-spacing:0.24px;">0.0</div>
<!-- p06_scopes.py -->
<div style="position:absolute;left:1919px;top:1431px;width:2.2px;height:562px;background:#0b0b0c;"></div>
<svg style="position:absolute;left:1920px;top:1431px;overflow:hidden" width="1920" height="562"><path d="M97.0 17.0 H1910.6" stroke="#8a8060" stroke-width="1.8"/><path d="M97.0 141.1 H1910.6" stroke="#8c6c20" stroke-width="2"/><path d="M97.0 263.0 H1910.6" stroke="#8c6c20" stroke-width="2"/><path d="M97.0 366.6 H1910.6" stroke="#8c6c20" stroke-width="2"/><path d="M97.0 442.2 H1910.6" stroke="#8c6c20" stroke-width="2"/><path d="M97.0 516.6 H1910.6" stroke="#8c6c20" stroke-width="2"/><path d="M118.0 102.3 H1906.6" stroke="#8c6c20" stroke-width="2" stroke-dasharray="12 12.05"/><path d="M97.0 102.3 H106.0" stroke="#8c6c20" stroke-width="2"/><path d="M118.0 226.2 H1906.6" stroke="#8c6c20" stroke-width="2" stroke-dasharray="12 12.05"/><path d="M97.0 226.2 H106.0" stroke="#8c6c20" stroke-width="2"/><path d="M118.0 326.0 H1906.6" stroke="#8c6c20" stroke-width="2" stroke-dasharray="12 12.05"/><path d="M97.0 326.0 H106.0" stroke="#8c6c20" stroke-width="2"/><path d="M97.0 103.2 H117.0" stroke="#8c6c20" stroke-width="1.6"/><path d="M97.0 81.2 H117.0" stroke="#8c6c20" stroke-width="1.6"/><path d="M97.0 65.7 H117.0" stroke="#8c6c20" stroke-width="1.6"/><path d="M97.0 53.7 H117.0" stroke="#8c6c20" stroke-width="1.6"/><path d="M97.0 44.0 H117.0" stroke="#8c6c20" stroke-width="1.6"/><path d="M97.0 35.8 H117.0" stroke="#8c6c20" stroke-width="1.6"/><path d="M97.0 28.7 H117.0" stroke="#8c6c20" stroke-width="1.6"/><path d="M97.0 22.5 H117.0" stroke="#8c6c20" stroke-width="1.6"/><path d="M97.0 227.3 H117.0" stroke="#8c6c20" stroke-width="1.6"/><path d="M97.0 205.9 H117.0" stroke="#8c6c20" stroke-width="1.6"/><path d="M97.0 190.6 H117.0" stroke="#8c6c20" stroke-width="1.6"/><path d="M97.0 178.6 H117.0" stroke="#8c6c20" stroke-width="1.6"/><path d="M97.0 168.7 H117.0" stroke="#8c6c20" stroke-width="1.6"/><path d="M97.0 160.4 H117.0" stroke="#8c6c20" stroke-width="1.6"/><path d="M97.0 153.1 H117.0" stroke="#8c6c20" stroke-width="1.6"/><path d="M97.0 146.7 H117.0" stroke="#8c6c20" stroke-width="1.6"/><path d="M97.0 338.2 H117.0" stroke="#8c6c20" stroke-width="1.6"/><path d="M97.0 320.3 H117.0" stroke="#8c6c20" stroke-width="1.6"/><path d="M97.0 307.1 H117.0" stroke="#8c6c20" stroke-width="1.6"/><path d="M97.0 296.6 H117.0" stroke="#8c6c20" stroke-width="1.6"/><path d="M97.0 287.9 H117.0" stroke="#8c6c20" stroke-width="1.6"/><path d="M97.0 280.4 H117.0" stroke="#8c6c20" stroke-width="1.6"/><path d="M97.0 273.9 H117.0" stroke="#8c6c20" stroke-width="1.6"/><path d="M97.0 268.0 H117.0" stroke="#8c6c20" stroke-width="1.6"/><path d="M97.0 422.6 H117.0" stroke="#8c6c20" stroke-width="1.6"/><path d="M97.0 410.0 H117.0" stroke="#8c6c20" stroke-width="1.6"/><path d="M97.0 400.5 H117.0" stroke="#8c6c20" stroke-width="1.6"/><path d="M97.0 392.8 H117.0" stroke="#8c6c20" stroke-width="1.6"/><path d="M97.0 386.2 H117.0" stroke="#8c6c20" stroke-width="1.6"/><path d="M97.0 380.6 H117.0" stroke="#8c6c20" stroke-width="1.6"/><path d="M97.0 375.5 H117.0" stroke="#8c6c20" stroke-width="1.6"/><path d="M97.0 371.0 H117.0" stroke="#8c6c20" stroke-width="1.6"/><path d="M97.0 475.2 H117.0" stroke="#8c6c20" stroke-width="1.6"/><path d="M97.0 468.1 H117.0" stroke="#8c6c20" stroke-width="1.6"/><path d="M97.0 462.6 H117.0" stroke="#8c6c20" stroke-width="1.6"/><path d="M97.0 457.9 H117.0" stroke="#8c6c20" stroke-width="1.6"/><path d="M97.0 453.9 H117.0" stroke="#8c6c20" stroke-width="1.6"/><path d="M97.0 450.4 H117.0" stroke="#8c6c20" stroke-width="1.6"/><path d="M97.0 447.2 H117.0" stroke="#8c6c20" stroke-width="1.6"/><path d="M97.0 444.3 H117.0" stroke="#8c6c20" stroke-width="1.6"/><path d="M97.0 516.6 V529.6" stroke="#8c6c20" stroke-width="2"/><path d="M134.8 516.6 V524.0" stroke="#8c6c20" stroke-width="2"/><path d="M172.6 516.6 V524.0" stroke="#8c6c20" stroke-width="2"/><path d="M210.3 516.6 V524.0" stroke="#8c6c20" stroke-width="2"/><path d="M248.1 516.6 V529.6" stroke="#8c6c20" stroke-width="2"/><path d="M285.9 516.6 V524.0" stroke="#8c6c20" stroke-width="2"/><path d="M323.7 516.6 V524.0" stroke="#8c6c20" stroke-width="2"/><path d="M361.4 516.6 V524.0" stroke="#8c6c20" stroke-width="2"/><path d="M399.2 516.6 V529.6" stroke="#8c6c20" stroke-width="2"/><path d="M437.0 516.6 V524.0" stroke="#8c6c20" stroke-width="2"/><path d="M474.8 516.6 V524.0" stroke="#8c6c20" stroke-width="2"/><path d="M512.5 516.6 V524.0" stroke="#8c6c20" stroke-width="2"/><path d="M550.3 516.6 V529.6" stroke="#8c6c20" stroke-width="2"/><path d="M588.1 516.6 V524.0" stroke="#8c6c20" stroke-width="2"/><path d="M625.8 516.6 V524.0" stroke="#8c6c20" stroke-width="2"/><path d="M663.6 516.6 V524.0" stroke="#8c6c20" stroke-width="2"/><path d="M701.4 516.6 V529.6" stroke="#8c6c20" stroke-width="2"/><path d="M739.2 516.6 V524.0" stroke="#8c6c20" stroke-width="2"/><path d="M776.9 516.6 V524.0" stroke="#8c6c20" stroke-width="2"/><path d="M814.7 516.6 V524.0" stroke="#8c6c20" stroke-width="2"/><path d="M852.5 516.6 V529.6" stroke="#8c6c20" stroke-width="2"/><path d="M890.3 516.6 V524.0" stroke="#8c6c20" stroke-width="2"/><path d="M928.1 516.6 V524.0" stroke="#8c6c20" stroke-width="2"/><path d="M965.8 516.6 V524.0" stroke="#8c6c20" stroke-width="2"/><path d="M1003.6 516.6 V529.6" stroke="#8c6c20" stroke-width="2"/><path d="M1041.4 516.6 V524.0" stroke="#8c6c20" stroke-width="2"/><path d="M1079.2 516.6 V524.0" stroke="#8c6c20" stroke-width="2"/><path d="M1116.9 516.6 V524.0" stroke="#8c6c20" stroke-width="2"/><path d="M1154.7 516.6 V529.6" stroke="#8c6c20" stroke-width="2"/><path d="M1192.5 516.6 V524.0" stroke="#8c6c20" stroke-width="2"/><path d="M1230.2 516.6 V524.0" stroke="#8c6c20" stroke-width="2"/><path d="M1268.0 516.6 V524.0" stroke="#8c6c20" stroke-width="2"/><path d="M1305.8 516.6 V529.6" stroke="#8c6c20" stroke-width="2"/><path d="M1343.6 516.6 V524.0" stroke="#8c6c20" stroke-width="2"/><path d="M1381.3 516.6 V524.0" stroke="#8c6c20" stroke-width="2"/><path d="M1419.1 516.6 V524.0" stroke="#8c6c20" stroke-width="2"/><path d="M1456.9 516.6 V529.6" stroke="#8c6c20" stroke-width="2"/><path d="M1494.7 516.6 V524.0" stroke="#8c6c20" stroke-width="2"/><path d="M1532.4 516.6 V524.0" stroke="#8c6c20" stroke-width="2"/><path d="M1570.2 516.6 V524.0" stroke="#8c6c20" stroke-width="2"/><path d="M1608.0 516.6 V529.6" stroke="#8c6c20" stroke-width="2"/><path d="M1645.8 516.6 V524.0" stroke="#8c6c20" stroke-width="2"/><path d="M1683.6 516.6 V524.0" stroke="#8c6c20" stroke-width="2"/><path d="M1721.3 516.6 V524.0" stroke="#8c6c20" stroke-width="2"/><path d="M1759.1 516.6 V529.6" stroke="#8c6c20" stroke-width="2"/><path d="M1796.9 516.6 V524.0" stroke="#8c6c20" stroke-width="2"/><path d="M1834.6 516.6 V524.0" stroke="#8c6c20" stroke-width="2"/><path d="M1872.4 516.6 V524.0" stroke="#8c6c20" stroke-width="2"/><path d="M1910.2 516.6 V529.6" stroke="#8c6c20" stroke-width="2"/><path d="M97.0 263.0 H394.8" stroke="#f2dfa6" stroke-width="2"/><path d="M97.0 273.9 H452.8" stroke="#6a6a6a" stroke-width="2"/><defs><linearGradient id="wl0" x1="0" x2="1"><stop offset="0" stop-color="#6a6a6a"/><stop offset="0.12" stop-color="#efefef"/><stop offset="1" stop-color="#efefef"/></linearGradient></defs><rect x="424.8" y="272.9" width="270.2" height="2" fill="url(#wl0)"/><path d="M394.8 256.0 V352.6" stroke="#fff" stroke-width="1.5"/><path d="M391.4 262.2 L394.6 257.0 L394.6 264.0 Z" fill="#fff"/><polygon points="396.2,282.0 407.3,278.7 418.3,275.8 429.4,274.5 440.4,273.8 455.9,273.2 455.9,274.6 440.4,275.3 429.4,276.7 418.3,279.5 407.3,284.0 396.2,290.0" fill="#fff"/><path d="M395.4 281.0 V329.0" stroke="#fff" stroke-width="2.2"/><defs><linearGradient id="ag0" x1="0" y1="0" x2="0" y2="1"><stop offset="0" stop-color="#ff4a4a" stop-opacity="0.05"/><stop offset="0.07" stop-color="#ff4a4a" stop-opacity="0.45"/><stop offset="0.16" stop-color="#ff4a4a" stop-opacity="0.22"/><stop offset="0.9" stop-color="#ff4a4a" stop-opacity="0.12"/><stop offset="1" stop-color="#ff4a4a" stop-opacity="0.4"/></linearGradient></defs><rect x="647.0" y="257.0" width="11.0" height="259.0" fill="url(#ag0)" opacity="0.16"/><rect x="656.0" y="257.0" width="2.0" height="259.0" fill="url(#ag0)" opacity="0.55"/><rect x="663.6" y="257.0" width="1.4" height="259.0" fill="url(#ag0)" opacity="0.5"/><rect x="673.0" y="249.0" width="6.0" height="267.0" fill="url(#ag0)" opacity="0.4"/><rect x="677.0" y="249.0" width="18.0" height="267.0" fill="url(#ag0)" opacity="0.2"/><rect x="682.4" y="249.0" width="2.2" height="267.0" fill="url(#ag0)" opacity="0.55"/><rect x="693.0" y="251.0" width="2.4" height="265.0" fill="url(#ag0)" opacity="0.55"/><rect x="656.6" y="259.0" width="1.4" height="22.0" rx="1" fill="#ff4a4a" opacity="0.9"/><rect x="663.9" y="258.0" width="1.3" height="44.0" rx="1" fill="#ff4a4a" opacity="0.9"/><rect x="655.0" y="269.0" width="3.4" height="8.0" rx="1" fill="#ff4a4a" opacity="0.45"/><rect x="662.6" y="269.0" width="3.6" height="9.0" rx="1" fill="#ff4a4a" opacity="0.45"/><rect x="674.4" y="268.0" width="3.4" height="12.0" rx="1" fill="#ff4a4a" opacity="0.55"/><rect x="682.2" y="268.0" width="3.4" height="12.0" rx="1" fill="#ff4a4a" opacity="0.55"/><rect x="692.4" y="268.0" width="3.4" height="12.0" rx="1" fill="#ff4a4a" opacity="0.55"/><rect x="673.0" y="274.6" width="23.0" height="3.0" rx="1" fill="#ff4a4a" opacity="0.3"/><circle cx="664.4" cy="301.4" r="1.3" fill="#ff4a4a"/><circle cx="657.4" cy="262.6" r="1" fill="#ff4a4a"/><circle cx="664.4" cy="409.0" r="0.9" fill="#ff4a4a"/><circle cx="658.0" cy="337.0" r="0.9" fill="#ff4a4a"/><circle cx="658.0" cy="461.0" r="0.9" fill="#ff4a4a"/><rect x="660.4" y="508.0" width="5.4" height="8" fill="#ff4a4a" opacity="0.7"/><rect x="661.4" y="513.0" width="4" height="3" fill="#ffe0e0" opacity="0.9"/><rect x="674.0" y="513.8" width="21" height="2.4" fill="#ff4a4a" opacity="0.95"/><rect x="674.0" y="501.0" width="3" height="14" fill="#ff4a4a" opacity="0.5"/><path d="M704.6 263.0 H1001.4" stroke="#f2dfa6" stroke-width="2"/><path d="M695.6 273.9 H1059.4" stroke="#6a6a6a" stroke-width="2"/><defs><linearGradient id="wl1" x1="0" x2="1"><stop offset="0" stop-color="#6a6a6a"/><stop offset="0.12" stop-color="#efefef"/><stop offset="1" stop-color="#efefef"/></linearGradient></defs><rect x="1031.4" y="272.9" width="270.2" height="2" fill="url(#wl1)"/><path d="M1001.4 256.0 V352.6" stroke="#fff" stroke-width="1.5"/><path d="M998.0 262.2 L1001.2 257.0 L1001.2 264.0 Z" fill="#fff"/><polygon points="1002.8,282.0 1013.9,278.7 1024.9,275.8 1036.0,274.5 1047.0,273.8 1062.5,273.2 1062.5,274.6 1047.0,275.3 1036.0,276.7 1024.9,279.5 1013.9,284.0 1002.8,290.0" fill="#fff"/><path d="M1002.0 281.0 V329.0" stroke="#fff" stroke-width="2.2"/><defs><linearGradient id="ag1" x1="0" y1="0" x2="0" y2="1"><stop offset="0" stop-color="#38e040" stop-opacity="0.05"/><stop offset="0.07" stop-color="#38e040" stop-opacity="0.45"/><stop offset="0.16" stop-color="#38e040" stop-opacity="0.22"/><stop offset="0.9" stop-color="#38e040" stop-opacity="0.12"/><stop offset="1" stop-color="#38e040" stop-opacity="0.4"/></linearGradient></defs><rect x="1253.6" y="257.0" width="11.0" height="259.0" fill="url(#ag1)" opacity="0.16"/><rect x="1262.6" y="257.0" width="2.0" height="259.0" fill="url(#ag1)" opacity="0.55"/><rect x="1270.2" y="257.0" width="1.4" height="259.0" fill="url(#ag1)" opacity="0.5"/><rect x="1279.6" y="249.0" width="6.0" height="267.0" fill="url(#ag1)" opacity="0.4"/><rect x="1283.6" y="249.0" width="18.0" height="267.0" fill="url(#ag1)" opacity="0.2"/><rect x="1289.0" y="249.0" width="2.2" height="267.0" fill="url(#ag1)" opacity="0.55"/><rect x="1299.6" y="251.0" width="2.4" height="265.0" fill="url(#ag1)" opacity="0.55"/><rect x="1263.2" y="259.0" width="1.4" height="22.0" rx="1" fill="#38e040" opacity="0.9"/><rect x="1270.5" y="258.0" width="1.3" height="44.0" rx="1" fill="#38e040" opacity="0.9"/><rect x="1261.6" y="269.0" width="3.4" height="8.0" rx="1" fill="#38e040" opacity="0.45"/><rect x="1269.2" y="269.0" width="3.6" height="9.0" rx="1" fill="#38e040" opacity="0.45"/><rect x="1281.0" y="268.0" width="3.4" height="12.0" rx="1" fill="#38e040" opacity="0.55"/><rect x="1288.8" y="268.0" width="3.4" height="12.0" rx="1" fill="#38e040" opacity="0.55"/><rect x="1299.0" y="268.0" width="3.4" height="12.0" rx="1" fill="#38e040" opacity="0.55"/><rect x="1279.6" y="274.6" width="23.0" height="3.0" rx="1" fill="#38e040" opacity="0.3"/><circle cx="1271.0" cy="301.4" r="1.3" fill="#38e040"/><circle cx="1264.0" cy="262.6" r="1" fill="#38e040"/><circle cx="1271.0" cy="409.0" r="0.9" fill="#38e040"/><circle cx="1264.6" cy="337.0" r="0.9" fill="#38e040"/><circle cx="1264.6" cy="461.0" r="0.9" fill="#38e040"/><rect x="1267.0" y="508.0" width="5.4" height="8" fill="#38e040" opacity="0.7"/><rect x="1268.0" y="513.0" width="4" height="3" fill="#ffe0e0" opacity="0.9"/><rect x="1280.6" y="513.8" width="21" height="2.4" fill="#38e040" opacity="0.95"/><rect x="1280.6" y="501.0" width="3" height="14" fill="#38e040" opacity="0.5"/><path d="M1311.2 263.0 H1608.0" stroke="#f2dfa6" stroke-width="2"/><path d="M1302.2 273.9 H1666.0" stroke="#6a6a6a" stroke-width="2"/><defs><linearGradient id="wl2" x1="0" x2="1"><stop offset="0" stop-color="#6a6a6a"/><stop offset="0.12" stop-color="#efefef"/><stop offset="1" stop-color="#efefef"/></linearGradient></defs><rect x="1638.0" y="272.9" width="270.2" height="2" fill="url(#wl2)"/><path d="M1608.0 256.0 V352.6" stroke="#fff" stroke-width="1.5"/><path d="M1604.6 262.2 L1607.8 257.0 L1607.8 264.0 Z" fill="#fff"/><polygon points="1609.4,282.0 1620.5,278.7 1631.5,275.8 1642.6,274.5 1653.6,273.8 1669.1,273.2 1669.1,274.6 1653.6,275.3 1642.6,276.7 1631.5,279.5 1620.5,284.0 1609.4,290.0" fill="#fff"/><path d="M1608.6 281.0 V329.0" stroke="#fff" stroke-width="2.2"/><defs><linearGradient id="ag2" x1="0" y1="0" x2="0" y2="1"><stop offset="0" stop-color="#5a5aff" stop-opacity="0.05"/><stop offset="0.07" stop-color="#5a5aff" stop-opacity="0.45"/><stop offset="0.16" stop-color="#5a5aff" stop-opacity="0.22"/><stop offset="0.9" stop-color="#5a5aff" stop-opacity="0.12"/><stop offset="1" stop-color="#5a5aff" stop-opacity="0.4"/></linearGradient></defs><rect x="1860.2" y="257.0" width="11.0" height="259.0" fill="url(#ag2)" opacity="0.16"/><rect x="1869.2" y="257.0" width="2.0" height="259.0" fill="url(#ag2)" opacity="0.55"/><rect x="1876.8" y="257.0" width="1.4" height="259.0" fill="url(#ag2)" opacity="0.5"/><rect x="1886.2" y="249.0" width="6.0" height="267.0" fill="url(#ag2)" opacity="0.4"/><rect x="1890.2" y="249.0" width="18.0" height="267.0" fill="url(#ag2)" opacity="0.2"/><rect x="1895.6" y="249.0" width="2.2" height="267.0" fill="url(#ag2)" opacity="0.55"/><rect x="1906.2" y="251.0" width="2.4" height="265.0" fill="url(#ag2)" opacity="0.55"/><rect x="1869.8" y="259.0" width="1.4" height="22.0" rx="1" fill="#5a5aff" opacity="0.9"/><rect x="1877.1" y="258.0" width="1.3" height="44.0" rx="1" fill="#5a5aff" opacity="0.9"/><rect x="1868.2" y="269.0" width="3.4" height="8.0" rx="1" fill="#5a5aff" opacity="0.45"/><rect x="1875.8" y="269.0" width="3.6" height="9.0" rx="1" fill="#5a5aff" opacity="0.45"/><rect x="1887.6" y="268.0" width="3.4" height="12.0" rx="1" fill="#5a5aff" opacity="0.55"/><rect x="1895.4" y="268.0" width="3.4" height="12.0" rx="1" fill="#5a5aff" opacity="0.55"/><rect x="1905.6" y="268.0" width="3.4" height="12.0" rx="1" fill="#5a5aff" opacity="0.55"/><rect x="1886.2" y="274.6" width="23.0" height="3.0" rx="1" fill="#5a5aff" opacity="0.3"/><circle cx="1877.6" cy="301.4" r="1.3" fill="#5a5aff"/><circle cx="1870.6" cy="262.6" r="1" fill="#5a5aff"/><circle cx="1877.6" cy="409.0" r="0.9" fill="#5a5aff"/><circle cx="1871.2" cy="337.0" r="0.9" fill="#5a5aff"/><circle cx="1871.2" cy="461.0" r="0.9" fill="#5a5aff"/><rect x="1873.6" y="508.0" width="5.4" height="8" fill="#5a5aff" opacity="0.7"/><rect x="1874.6" y="513.0" width="4" height="3" fill="#ffe0e0" opacity="0.9"/><rect x="1887.2" y="513.8" width="21" height="2.4" fill="#5a5aff" opacity="0.95"/><rect x="1887.2" y="501.0" width="3" height="14" fill="#5a5aff" opacity="0.5"/></svg>
<div class="t" style="left:1928.3px;top:1434.0px;font-size:25px;line-height:28px;color:#d2aa38;letter-spacing:0.90px;">10000</div>
<div class="t" style="left:1943.1px;top:1558.0px;font-size:25px;line-height:28px;color:#d2aa38;letter-spacing:0.90px;">1000</div>
<div class="t" style="left:1957.9px;top:1680.0px;font-size:25px;line-height:28px;color:#d2aa38;letter-spacing:0.90px;">100</div>
<div class="t" style="left:1972.7px;top:1784.0px;font-size:25px;line-height:28px;color:#d2aa38;letter-spacing:0.90px;">10</div>
<div class="t" style="left:1987.7px;top:1859.0px;font-size:25px;line-height:28px;color:#d2aa38;letter-spacing:0.00px;">1</div>
<div class="t" style="left:1987.5px;top:1934.0px;font-size:25px;line-height:28px;color:#d2aa38;letter-spacing:0.00px;">0</div>
<!-- p07_bottom.py -->
<svg style="position:absolute;left:44px;top:2004px;" width="44" height="40" viewBox="0 0 44 40"><path d="M21.1 2.9 a7.6 7.6 0 0 1 7.6 7.6 c0 4.6 -4.6 6.8 -7.6 11.4 c-3 -4.6 -7.6 -6.8 -7.6 -11.4 a7.6 7.6 0 0 1 7.6 -7.6Z" fill="#fff"/><path d="M20.4 23.2 c-1 5.6 -3.6 13.2 -10.8 13.2 a7.4 7.4 0 0 1 -1.4 -14.7 c5 -0.8 8.4 1 12.2 1.5Z" fill="#fff"/><path d="M21.8 23.2 c1 5.6 3.6 13.2 10.8 13.2 a7.4 7.4 0 0 0 1.4 -14.7 c-5 -0.8 -8.4 1 -12.2 1.5Z" fill="#fff"/></svg>
<div class="t" style="left:99.5px;top:2011.0px;font-size:28px;line-height:31px;color:#fff;letter-spacing:-0.82px;font-weight:bold;">DaVinci Resolve Studio 20</div>
<svg style="position:absolute;left:1183px;top:2006px;" width="40" height="38" viewBox="0 0 40 38"><path d="M7.5 3.6 H32.5 M5 7.4 H35" stroke="#5e5e5e" stroke-width="1.6"/><rect x="3" y="11.2" width="34" height="23.6" rx="1.5" fill="#2a2a2c" stroke="#5e5e5e" stroke-width="2"/><circle cx="11" cy="20" r="2.6" fill="#5e5e5e"/><path d="M6.5 31 L14.5 24 L19.5 28.5 L27 21.5 L34 31" fill="none" stroke="#5e5e5e" stroke-width="2"/></svg>
<svg style="position:absolute;left:1414px;top:2004px;" width="56" height="38" viewBox="0 0 56 38"><path d="M17.4 7.7 H47.4 Q52.6 7.7 51.8 12.6 L49.2 27 Q48.4 31.1 44.2 31.1 H15.8 Q11.6 31.1 12.2 27 L13.6 12.2" fill="#2c2c2e" stroke="#8a8a8a" stroke-width="2.2"/><rect x="0" y="9.4" width="15.4" height="17.6" fill="#1b1b1e"/><rect x="8" y="5" width="9" height="6" fill="#1b1b1e"/><path d="M10.4 12 H18.6 M6 18.1 H18.6 M2.2 24.2 H18.6" stroke="#8a8a8a" stroke-width="2.2"/><path d="M34.9 2.4 L26.2 35.6" stroke="#1b1b1e" stroke-width="6.4"/><path d="M34.9 2.4 L26.2 35.6" stroke="#8a8a8a" stroke-width="2.2"/><g fill="#8a8a8a"><circle cx="37.1" cy="12.6" r="1.7"/><circle cx="42.1" cy="12.6" r="1.7"/><circle cx="36.6" cy="25.7" r="1.7"/><circle cx="41.6" cy="25.7" r="1.7"/><circle cx="20.6" cy="12.6" r="1.5"/><circle cx="25.2" cy="12.6" r="1.5"/><circle cx="19.8" cy="25.7" r="1.5"/><circle cx="24.6" cy="25.7" r="1.5"/></g></svg>
<svg style="position:absolute;left:1660px;top:2004px;" width="48" height="42" viewBox="0 0 48 42"><g fill="#8a8a8a"><rect x="0.9" y="11" width="19.5" height="5.4" rx="2.7"/><rect x="29.1" y="11" width="13.7" height="5.4" rx="2.7"/><rect x="10.2" y="19.1" width="10.2" height="5.4" rx="2.7"/><rect x="27.4" y="19.1" width="13.7" height="5.4" rx="2.7"/><rect x="0.9" y="27.3" width="19.5" height="5.4" rx="2.7"/><rect x="27.4" y="27.3" width="18.7" height="5.4" rx="2.7"/><rect x="22.8" y="6" width="1.9" height="32.8" /><path d="M20.8 3.2 H26.7 V6.4 L24.8 8.6 H22.7 L20.8 6.4 Z"/></g><rect x="23.1" y="4.2" width="1.3" height="2.4" fill="#1b1b1e"/></svg>
<svg style="position:absolute;left:1896px;top:2002px;" width="50" height="44" viewBox="0 0 50 44"><path d="M5 24 Q8 14 22 12 Q32 10 36 6 Q30 16 20 18 Q12 20 12 28 Q12 34 18 38 Q6 36 5 24Z" fill="#2e2e30"/><path d="M40.2 12 L28.4 35.6" stroke="#8a8a8a" stroke-width="7.4" stroke-linecap="round"/><path d="M40 12.6 L29 34.4" stroke="#333336" stroke-width="3.2" stroke-linecap="round"/><path d="M13.6 7.4 V16.2 M9.2 11.8 H18" stroke="#a0a0a0" stroke-width="1.5" stroke-linecap="round"/><path d="M32.2 1.6 V10.4 M27.8 6 H36.6" stroke="#a0a0a0" stroke-width="1.5" stroke-linecap="round"/><path d="M23.4 16.4 V24.8 M19.2 20.6 H27.6" stroke="#a0a0a0" stroke-width="1.5" stroke-linecap="round"/></svg>
<svg style="position:absolute;left:2145.1px;top:2007px;" width="34" height="34" viewBox="0 0 34 34"><circle cx="17" cy="17" r="3.7" fill="#8a8a8a"/><circle cx="20.2" cy="3.3" r="3.8" fill="#a060c4"/><circle cx="28.9" cy="9.8" r="3.8" fill="#6464dc"/><circle cx="30.2" cy="20.7" r="3.8" fill="#4484cc"/><circle cx="23.7" cy="28.9" r="3.8" fill="#22b244"/><circle cx="13.3" cy="30.2" r="3.8" fill="#e8d23c"/><circle cx="4.6" cy="24.0" r="3.8" fill="#f0a43c"/><circle cx="3.3" cy="13.3" r="3.8" fill="#f05252"/><circle cx="9.5" cy="4.8" r="3.8" fill="#d444a4"/></svg>
<svg style="position:absolute;left:2386px;top:2008px;" width="34" height="34" viewBox="0 0 34 34"><g fill="#8a8a8a"><path d="M11 6.6 L30 2.4 V7.6 L11 11.8 Z"/><rect x="9.6" y="7" width="2.6" height="20"/><rect x="27.6" y="3" width="2.6" height="20"/><ellipse cx="7" cy="27.2" rx="5.2" ry="4" transform="rotate(-20 7 27.2)"/><ellipse cx="25" cy="23.2" rx="5.2" ry="4" transform="rotate(-20 25 23.2)"/></g></svg>
<svg style="position:absolute;left:2622px;top:2004px;" width="40" height="40" viewBox="0 0 40 40"><g fill="none" stroke="#6a6a6a" stroke-width="1.9" stroke-linejoin="round"><path d="M33.6 2.6 Q35 12 30.4 20.4 L24 30 L12.6 23.6 L17.6 13 Q23 5 33.6 2.6Z" fill="#2a2a2c"/><circle cx="24.8" cy="14" r="3.2"/><path d="M16.6 15.4 L5.4 18.6 L11 24.6 M27.8 24.4 L24.8 36 L18.6 30 M10.6 27 Q5 28.6 5.6 35.4 Q11 35 13.8 30"/></g></svg>
<svg style="position:absolute;left:3662px;top:2012px;" width="32" height="28" viewBox="0 0 32 28"><path d="M16 1.2 L30.6 14.4 H26.6 V26.6 H19 V18.4 H13 V26.6 H5.4 V14.4 H1.4 Z" fill="#8c8c8c"/></svg>
<svg style="position:absolute;left:3760px;top:2010px;" width="32" height="32" viewBox="0 0 32 32"><g transform="translate(16,16)" fill="#8c8c8c"><rect x="-3.4" y="-15" width="6.8" height="8" rx="1" transform="rotate(0)"/><rect x="-3.4" y="-15" width="6.8" height="8" rx="1" transform="rotate(45)"/><rect x="-3.4" y="-15" width="6.8" height="8" rx="1" transform="rotate(90)"/><rect x="-3.4" y="-15" width="6.8" height="8" rx="1" transform="rotate(135)"/><rect x="-3.4" y="-15" width="6.8" height="8" rx="1" transform="rotate(180)"/><rect x="-3.4" y="-15" width="6.8" height="8" rx="1" transform="rotate(225)"/><rect x="-3.4" y="-15" width="6.8" height="8" rx="1" transform="rotate(270)"/><rect x="-3.4" y="-15" width="6.8" height="8" rx="1" transform="rotate(315)"/><circle r="10.6"/></g><circle cx="16" cy="16" r="5.2" fill="#1b1b1e"/></svg>
<svg style="position:absolute;left:41px;top:2089px;" width="36" height="36" viewBox="0 0 36 36"><defs><linearGradient id="wg" x1="0" y1="0" x2="1" y2="1"><stop offset="0" stop-color="#7ae6fa"/><stop offset="0.5" stop-color="#36bcf6"/><stop offset="1" stop-color="#0f8eee"/></linearGradient></defs><path d="M0.8 2.6 Q0.8 0.6 2.8 0.6 H16.4 V16.4 H0.8 Z M18.4 0.6 H32.6 Q34.6 0.6 34.6 2.6 V16.4 H18.4 Z M0.8 18.4 H16.4 V34.4 H2.8 Q0.8 34.4 0.8 32.4 Z M18.4 18.4 H34.6 V32.4 Q34.6 34.4 32.6 34.4 H18.4 Z" fill="url(#wg)"/></svg>
<svg style="position:absolute;left:117px;top:2090px;" width="34" height="32" viewBox="0 0 34 32"><defs><linearGradient id="pcg" x1="0" y1="0" x2="1" y2="1"><stop offset="0" stop-color="#38dcd8"/><stop offset="1" stop-color="#1478d4"/></linearGradient></defs><rect x="1" y="1.8" width="31.8" height="22.4" rx="1.2" fill="url(#pcg)"/><rect x="1" y="1.8" width="31.8" height="1.6" fill="#1a6a8a" opacity="0.5"/><rect x="13.6" y="24.2" width="6.4" height="3.6" fill="#7a8088"/><rect x="9.2" y="27.4" width="15.2" height="1.8" rx="0.9" fill="#a0a4aa"/></svg>
<div class="t" style="left:165.3px;top:2092.0px;font-size:29px;line-height:32px;color:#fff;letter-spacing:-1.67px;-webkit-mask-image:linear-gradient(90deg,#000 0,#000 calc(100% - 15px),transparent calc(100% - 3px));mask-image:linear-gradient(90deg,#000 0,#000 calc(100% - 15px),transparent calc(100% - 3px));">This PC - File</div>
<div style="position:absolute;left:128.9px;top:2142.8px;width:9px;height:6px;background:#8c8c8c;border-radius:3px;"></div>
<svg style="position:absolute;left:356px;top:2090px;" width="34" height="30" viewBox="0 0 34 30"><defs><linearGradient id="vg" x1="0" y1="0" x2="0" y2="1"><stop offset="0" stop-color="#b45af0"/><stop offset="1" stop-color="#8a3ad8"/></linearGradient></defs><path d="M1 4 Q1 2.2 2.8 2.2 H11.4 L14.4 5 H31 Q32.8 5 32.8 6.8 V10 H1 Z" fill="#9a62c8"/><rect x="1" y="6.6" width="31.8" height="21.6" rx="1.8" fill="url(#vg)"/><g fill="#4a1a8a"><rect x="3" y="9.4" width="3" height="3"/><rect x="3" y="15.4" width="3" height="3"/><rect x="3" y="21.4" width="3" height="3"/><rect x="27.8" y="9.4" width="3" height="3"/><rect x="27.8" y="15.4" width="3" height="3"/><rect x="27.8" y="21.4" width="3" height="3"/></g><path d="M13.2 10.6 L23 17.2 L13.2 23.8 Z" fill="#fff"/></svg>
<div class="t" style="left:404.9px;top:2092.0px;font-size:29px;line-height:32px;color:#fff;letter-spacing:-0.90px;-webkit-mask-image:linear-gradient(90deg,#000 0,#000 calc(100% - 15px),transparent calc(100% - 3px));mask-image:linear-gradient(90deg,#000 0,#000 calc(100% - 15px),transparent calc(100% - 3px));">Videos - File</div>
<div style="position:absolute;left:367.5px;top:2142.8px;width:9px;height:6px;background:#8c8c8c;border-radius:3px;"></div>
<svg style="position:absolute;left:591px;top:2090px;" width="38" height="30" viewBox="0 0 38 30"><rect x="1" y="1.8" width="36" height="27" rx="2.6" fill="#383838"/><path d="M1 4.4 Q1 1.8 3.6 1.8 H34.4 Q37 1.8 37 4.4 V7 H1 Z" fill="#5a5a5a"/><rect x="1" y="1.8" width="12" height="5.2" fill="#8a8a8a"/><rect x="13" y="1.8" width="10" height="5.2" fill="#6e6e6e"/><path d="M6.4 12.6 L12.6 17.4 L6.4 22.4" fill="none" stroke="#d8d8d8" stroke-width="2.6"/><rect x="15" y="20.6" width="13.6" height="3" fill="#f0f0f0"/></svg>
<div style="position:absolute;left:650px;top:2061.6px;width:239.8px;height:88.6px;background:#2a2a2a;border:1.5px solid #363636;box-sizing:border-box;border-radius:9px;"></div>
<svg style="position:absolute;left:667px;top:2091px;" width="30" height="30" viewBox="0 0 30 30"><defs><linearGradient id="lg3" x1="0" y1="0" x2="1" y2="1"><stop offset="0" stop-color="#3fe0e8"/><stop offset="0.35" stop-color="#9a6cf0"/><stop offset="0.65" stop-color="#ff4a6a"/><stop offset="1" stop-color="#ff9a30"/></linearGradient><linearGradient id="lg4" x1="1" y1="0" x2="0" y2="1"><stop offset="0" stop-color="#c050e0" stop-opacity="0"/><stop offset="0.6" stop-color="#d8e030" stop-opacity="0.9"/><stop offset="1" stop-color="#f0f020"/></linearGradient></defs><rect x="1" y="1" width="27.6" height="27.6" rx="6.6" fill="#1f2b3d" stroke="url(#lg3)" stroke-width="1.4"/><rect x="1" y="1" width="27.6" height="27.6" rx="6.6" fill="none" stroke="url(#lg4)" stroke-width="1.4"/><g transform="translate(0.4,0.4) scale(0.76)"><path d="M19 6.5 a5.2 5.2 0 0 1 5.2 5.2 c0 3.2 -3.4 4.6 -5.2 8 c-1.8 -3.4 -5.2 -4.8 -5.2 -8 a5.2 5.2 0 0 1 5.2 -5.2Z" fill="#3ad8f0"/><path d="M19 21.5 c-0.6 3.6 -2.2 8.2 -7.2 8.2 a5.1 5.1 0 0 1 -1 -10.1 c3.4 -0.6 5.6 1.2 8.2 1.9Z" fill="#f0e030"/><path d="M19 21.5 c0.6 3.6 2.2 8.2 7.2 8.2 a5.1 5.1 0 0 0 1 -10.1 c-3.4 -0.6 -5.6 1.2 -8.2 1.9Z" fill="#f45050"/></g></svg>
<div class="t" style="left:711.6px;top:2092.0px;font-size:29px;line-height:32px;color:#fff;letter-spacing:-1.48px;">DaVinci Reso</div>
<div style="position:absolute;left:668.8px;top:2142px;width:24.2px;height:7px;background:#4cc2ff;border-radius:3.5px;"></div>
<svg style="position:absolute;left:912px;top:2087px;" width="38" height="38" viewBox="0 0 38 38"><circle cx="19" cy="19" r="18.3" fill="#f6b704"/><path d="M19 19 L3.2 10 A18.3 18.3 0 0 1 34.8 10 Z" fill="#f2a600"/><path d="M19 19 L34.8 10 A18.3 18.3 0 0 1 19 37.3 Z" fill="#fcd462"/><path d="M19 19 L19 37.3 A18.3 18.3 0 0 1 3.2 10 Z" fill="#f8c026"/><circle cx="19" cy="19" r="8.8" fill="#fff"/><circle cx="19" cy="19" r="7" fill="#f8bc10"/></svg>
<div class="t" style="left:961.1px;top:2092.0px;font-size:29px;line-height:32px;color:#fff;letter-spacing:-1.09px;-webkit-mask-image:linear-gradient(90deg,#000 0,#000 calc(100% - 15px),transparent calc(100% - 3px));mask-image:linear-gradient(90deg,#000 0,#000 calc(100% - 15px),transparent calc(100% - 3px));">is jxr lossy - C</div>
<div style="position:absolute;left:925.7px;top:2142.8px;width:9px;height:6px;background:#8c8c8c;border-radius:3px;"></div>
<svg style="position:absolute;left:1160px;top:2087px;" width="38" height="38" viewBox="0 0 38 38"><circle cx="19" cy="19" r="18" fill="#e33b2e"/><path d="M19 19 L3.4 10 A18 18 0 0 0 10 34.6 Z" fill="#2da94f"/><path d="M19 19 L10 34.6 A18 18 0 0 0 37 19 L34.6 10 Z" fill="#fcc31e"/><path d="M19 19 L3.4 10 A18 18 0 0 1 34.6 10 Z" fill="#e33b2e"/><circle cx="19" cy="19" r="8.6" fill="#fff"/><circle cx="19" cy="19" r="6.8" fill="#4285f4"/><circle cx="28" cy="9" r="8.6" fill="#1a3a8a"/><path d="M23 5 L30 3 L34 9 L29 15 L24 12 Z" fill="#c8285a"/><path d="M26 6 L31 8 L28 13 Z" fill="#2a9ad8"/></svg>
<div class="t" style="left:1208.7px;top:2092.0px;font-size:29px;line-height:32px;color:#fff;letter-spacing:-0.13px;-webkit-mask-image:linear-gradient(90deg,#000 0,#000 calc(100% - 15px),transparent calc(100% - 3px));mask-image:linear-gradient(90deg,#000 0,#000 calc(100% - 15px),transparent calc(100% - 3px));">ledoge/jxr_to</div>
<div style="position:absolute;left:1173.9px;top:2142.8px;width:9px;height:6px;background:#8c8c8c;border-radius:3px;"></div>
<svg style="position:absolute;left:1411px;top:2089px;" width="34" height="34" viewBox="0 0 34 34"><defs><radialGradient id="mpg" cx="0.5" cy="0.4" r="0.6"><stop offset="0" stop-color="#9a3aa0"/><stop offset="1" stop-color="#4a0a5a"/></radialGradient></defs><circle cx="17" cy="17" r="15.8" fill="url(#mpg)" stroke="#b890c0" stroke-width="1.2"/><circle cx="17" cy="17" r="7.6" fill="#d8c0dc"/><path d="M14.4 12.6 L22 17 L14.4 21.4 Z" fill="#6a1a78"/></svg>
<div class="t" style="left:1456.2px;top:2092.0px;font-size:29px;line-height:32px;color:#fff;letter-spacing:-1.33px;-webkit-mask-image:linear-gradient(90deg,#000 0,#000 calc(100% - 15px),transparent calc(100% - 3px));mask-image:linear-gradient(90deg,#000 0,#000 calc(100% - 15px),transparent calc(100% - 3px));">100 203 nit.m</div>
<div style="position:absolute;left:1422px;top:2144.6px;width:24px;height:2.4px;background:#8c8c8c;border-radius:1.2px;"></div>
<div style="position:absolute;left:1410.2px;top:2142.8px;width:12.4px;height:6px;background:#f8d800;border-radius:3px;"></div>
<svg style="position:absolute;left:1651px;top:2087px;" width="38" height="38" viewBox="0 0 38 38"><circle cx="19" cy="19" r="17" fill="#000" stroke="#fff" stroke-width="2"/><g transform="translate(19,19)"><path d="M0.4 1.2 C-3 -1.2 -7.6 -4.2 -8.5 -8.6 C-9 -11 -7.6 -13.6 -5.5 -15.1 C-7 -11.6 -6 -8.2 -3.6 -5.8 C-2.2 -4.4 -0.6 -3.2 1.2 -2.4 Z" fill="#fff"/><g transform="rotate(120)"><path d="M0.4 1.2 C-3 -1.2 -7.6 -4.2 -8.5 -8.6 C-9 -11 -7.6 -13.6 -5.5 -15.1 C-7 -11.6 -6 -8.2 -3.6 -5.8 C-2.2 -4.4 -0.6 -3.2 1.2 -2.4 Z" fill="#fff"/></g><g transform="rotate(240)"><path d="M0.4 1.2 C-3 -1.2 -7.6 -4.2 -8.5 -8.6 C-9 -11 -7.6 -13.6 -5.5 -15.1 C-7 -11.6 -6 -8.2 -3.6 -5.8 C-2.2 -4.4 -0.6 -3.2 1.2 -2.4 Z" fill="#fff"/></g><circle r="1.6" fill="#fff"/></g></svg>
<div class="t" style="left:1700.2px;top:2092.0px;font-size:29px;line-height:32px;color:#fff;letter-spacing:-2.27px;-webkit-mask-image:linear-gradient(90deg,#000 0,#000 calc(100% - 15px),transparent calc(100% - 3px));mask-image:linear-gradient(90deg,#000 0,#000 calc(100% - 15px),transparent calc(100% - 3px));">OBS 32.1.0 - F</div>
<div style="position:absolute;left:1664.8px;top:2142.8px;width:9px;height:6px;background:#8c8c8c;border-radius:3px;"></div>
<svg style="position:absolute;left:1901px;top:2088px;" width="37" height="35" viewBox="0 0 37 35"><rect x="0" y="0" width="36" height="2.2" fill="#0000e0"/><rect x="0" y="2.2" width="36" height="15" fill="#000"/><rect x="5.6" y="13.6" width="28.8" height="19.4" fill="#fff" stroke="#0000d0" stroke-width="2.4"/></svg>
<div class="t" style="left:1901.7px;top:2092.0px;font-size:9px;line-height:10px;color:#fff;letter-spacing:0.72px;">Exiftool</div>
<div class="t" style="left:1911.1px;top:2105.0px;font-size:12px;line-height:14px;color:#0a0ad0;letter-spacing:-0.12px;font-weight:bold;">GUI</div>
<div class="t" style="left:1948.6px;top:2092.0px;font-size:29px;line-height:32px;color:#fff;letter-spacing:-1.10px;">ExifToolGui -</div>
<div style="position:absolute;left:1914.1px;top:2142.8px;width:9px;height:6px;background:#8c8c8c;border-radius:3px;"></div>
<svg style="position:absolute;left:2151px;top:2089.6px;" width="33" height="33" viewBox="0 0 33 33"><defs><linearGradient id="ph2151" x1="0" y1="0" x2="1" y2="1"><stop offset="0" stop-color="#2a7af0"/><stop offset="1" stop-color="#6a4ac8"/></linearGradient><clipPath id="pc2151"><rect x="0.4" y="0.4" width="32" height="32" rx="5"/></clipPath></defs><rect x="0.4" y="0.4" width="32" height="32" rx="5" fill="url(#ph2151)"/><g clip-path="url(#pc2151)"><path d="M-2 26 L16 7 L36 30 V36 H-2 Z" fill="#38c0f0"/><path d="M6 34 L20 19 L36 34 Z" fill="#1890e0"/><path d="M-2 34 L10 22 L22 34 Z" fill="#5ad4f8" opacity="0.6"/></g><circle cx="24.4" cy="7.2" r="2.9" fill="#f4f4fa"/></svg>
<div class="t" style="left:2197.6px;top:2092.0px;font-size:29px;line-height:32px;color:#fff;letter-spacing:-1.04px;-webkit-mask-image:linear-gradient(90deg,#000 0,#000 calc(100% - 15px),transparent calc(100% - 3px));mask-image:linear-gradient(90deg,#000 0,#000 calc(100% - 15px),transparent calc(100% - 3px));">Screenshot 20</div>
<div style="position:absolute;left:2161.8px;top:2142.8px;width:9px;height:6px;background:#8c8c8c;border-radius:3px;"></div>
<svg style="position:absolute;left:2399.4px;top:2089.6px;" width="33" height="33" viewBox="0 0 33 33"><defs><linearGradient id="ph2399" x1="0" y1="0" x2="1" y2="1"><stop offset="0" stop-color="#2a7af0"/><stop offset="1" stop-color="#6a4ac8"/></linearGradient><clipPath id="pc2399"><rect x="0.4" y="0.4" width="32" height="32" rx="5"/></clipPath></defs><rect x="0.4" y="0.4" width="32" height="32" rx="5" fill="url(#ph2399)"/><g clip-path="url(#pc2399)"><path d="M-2 26 L16 7 L36 30 V36 H-2 Z" fill="#38c0f0"/><path d="M6 34 L20 19 L36 34 Z" fill="#1890e0"/><path d="M-2 34 L10 22 L22 34 Z" fill="#5ad4f8" opacity="0.6"/></g><circle cx="24.4" cy="7.2" r="2.9" fill="#f4f4fa"/></svg>
<div class="t" style="left:2446.5px;top:2092.0px;font-size:29px;line-height:32px;color:#fff;letter-spacing:-1.11px;-webkit-mask-image:linear-gradient(90deg,#000 0,#000 calc(100% - 15px),transparent calc(100% - 3px));mask-image:linear-gradient(90deg,#000 0,#000 calc(100% - 15px),transparent calc(100% - 3px));">Screenshot 20</div>
<div style="position:absolute;left:2411px;top:2142.8px;width:9px;height:6px;background:#8c8c8c;border-radius:3px;"></div>
<div style="position:absolute;left:2648.6px;top:2088.9px;width:31.4px;height:31.2px;background:#001e36;border-radius:5.4px;"></div>
<div class="t" style="left:2651.4px;top:2096.0px;font-size:15px;line-height:17px;color:#31a8ff;letter-spacing:-0.21px;font-weight:bold;">LrC</div>
<div class="t" style="left:2693.6px;top:2092.0px;font-size:29px;line-height:32px;color:#fff;letter-spacing:-0.97px;-webkit-mask-image:linear-gradient(90deg,#000 0,#000 calc(100% - 15px),transparent calc(100% - 3px));mask-image:linear-gradient(90deg,#000 0,#000 calc(100% - 15px),transparent calc(100% - 3px));">Lightroom Ca</div>
<div style="position:absolute;left:2659px;top:2142.8px;width:9px;height:6px;background:#8c8c8c;border-radius:3px;"></div>
<svg style="position:absolute;left:2917.8px;top:2087px;" width="38" height="38" viewBox="0 0 38 38"><g transform="translate(19,19)"><path d="M0 -17.4 L2.6 -4 L4 -4 L17.4 0 L4 2.6 L4 4 L0 17.4 L-2.6 4 L-4 4 L-17.4 0 L-4 -2.6 L-4 -4 Z" fill="#fff"/><path d="M4.94975 4.94975 L8.76812 8.76812" stroke="#fff" stroke-width="1.6"/><path d="M-4.94975 4.94975 L-8.76812 8.76812" stroke="#fff" stroke-width="1.6"/><path d="M-4.94975 -4.94975 L-8.76812 -8.76812" stroke="#fff" stroke-width="1.6"/><path d="M4.94975 -4.94975 L8.76812 -8.76812" stroke="#fff" stroke-width="1.6"/><path d="M0 -9 L1.6 -1.6 L9 0 L1.6 1.6 L0 9 L-1.6 1.6 L-9 0 L-1.6 -1.6 Z" fill="#1c1c1c"/><path d="M0 -17 L0 17 M-17 0 L17 0" stroke="#fff" stroke-width="1.4"/></g></svg>
<svg style="position:absolute;left:2989.8px;top:2087px;" width="38" height="38" viewBox="0 0 38 38"><circle cx="19" cy="19" r="17" fill="#000" stroke="#fff" stroke-width="2"/><g transform="translate(19,19)"><path d="M0.4 1.2 C-3 -1.2 -7.6 -4.2 -8.5 -8.6 C-9 -11 -7.6 -13.6 -5.5 -15.1 C-7 -11.6 -6 -8.2 -3.6 -5.8 C-2.2 -4.4 -0.6 -3.2 1.2 -2.4 Z" fill="#fff"/><g transform="rotate(120)"><path d="M0.4 1.2 C-3 -1.2 -7.6 -4.2 -8.5 -8.6 C-9 -11 -7.6 -13.6 -5.5 -15.1 C-7 -11.6 -6 -8.2 -3.6 -5.8 C-2.2 -4.4 -0.6 -3.2 1.2 -2.4 Z" fill="#fff"/></g><g transform="rotate(240)"><path d="M0.4 1.2 C-3 -1.2 -7.6 -4.2 -8.5 -8.6 C-9 -11 -7.6 -13.6 -5.5 -15.1 C-7 -11.6 -6 -8.2 -3.6 -5.8 C-2.2 -4.4 -0.6 -3.2 1.2 -2.4 Z" fill="#fff"/></g><circle r="1.6" fill="#fff"/></g></svg>
<svg style="position:absolute;left:3062px;top:2087px;" width="38" height="38" viewBox="0 0 38 38"><defs><linearGradient id="qbg" x1="0" y1="0" x2="0" y2="1"><stop offset="0" stop-color="#7ab0f0"/><stop offset="1" stop-color="#2a64c8"/></linearGradient></defs><circle cx="18.9" cy="19" r="17.4" fill="url(#qbg)" stroke="#9cc4f4" stroke-width="1"/></svg>
<div class="t" style="left:3067.6px;top:2094.0px;font-size:24px;line-height:27px;color:#fff;letter-spacing:0.12px;">qb</div>
<svg style="position:absolute;left:3136px;top:2088px;" width="36" height="36" viewBox="0 0 36 36"><rect x="0.4" y="0.8" width="34.6" height="34.6" fill="#1e201c"/><rect x="17" y="9.6" width="13.4" height="16.6" fill="#76b900"/><path d="M4.4 18.2 Q10 10.4 17.6 10.6 V13.2 Q12 13 8.2 18 Q11.4 22.8 17.6 22.6 V25.2 Q9.6 25.4 4.4 18.2Z" fill="#76b900"/><path d="M17.6 14.8 Q21.6 15 23 18 Q21 21.4 17.6 21 V19.2 Q19.8 19.2 20.6 18 Q19.6 16.6 17.6 16.6 Z" fill="#1e201c"/><path d="M11.4 18 Q13.6 14.6 17.6 14.8 V16.6 Q15.4 16.6 14.2 18 Q15.4 19.6 17.6 19.2 V21 Q13.6 21.4 11.4 18Z" fill="#76b900"/></svg>
<svg style="position:absolute;left:3206px;top:2087px;" width="38" height="38" viewBox="0 0 38 38"><rect x="0.9" y="0.9" width="36.4" height="36.2" rx="4.4" fill="#fff"/><path d="M14.2 8.6 H23.8 L33.4 25 H23.8 Z" fill="#fbbc04"/><path d="M14.2 8.6 L4.6 25 L9.4 30.6 L19 14 Z" fill="#1ea362" /><path d="M4.6 25 H33.4 L28.6 30.6 H9.4 Z" fill="#4285f4"/><path d="M23.8 25 H33.4 L28.6 30.6 L26.4 29.4 Z" fill="#ea4335"/><path d="M14.2 8.6 H23.8 L19 14 Z" fill="#188038" opacity="0.0"/></svg>
<svg style="position:absolute;left:3278px;top:2087px;" width="38" height="38" viewBox="0 0 38 38"><defs><linearGradient id="stg" x1="0" y1="0" x2="0" y2="1"><stop offset="0" stop-color="#111d4a"/><stop offset="0.6" stop-color="#14407c"/><stop offset="1" stop-color="#1a8ad4"/></linearGradient></defs><circle cx="19.1" cy="19" r="18" fill="url(#stg)"/><circle cx="24.6" cy="14.6" r="6.4" fill="none" stroke="#fff" stroke-width="2.4"/><circle cx="24.6" cy="14.6" r="3" fill="#fff"/><path d="M1.4 20.6 L12.6 25.2 L19.4 19.4" fill="none" stroke="#fff" stroke-width="4.6" stroke-linejoin="round"/><circle cx="12.8" cy="26.4" r="4.6" fill="#14407c" stroke="#fff" stroke-width="2"/></svg>
<svg style="position:absolute;left:3356px;top:2086px;" width="32" height="40" viewBox="0 0 32 40"><g fill="none" stroke="#fff" stroke-width="1.8"><path d="M5.6 10.4 V3 H18.6 V10.4"/><path d="M16 36.6 H4.6 Q2.8 36.6 2.8 34.8 V12.2 Q2.8 10.4 4.6 10.4 H19.6 Q21.4 10.4 21.4 12.2 V27"/><path d="M15.6 32.6 L20 36.8 L29.6 26.6" stroke-width="1.6"/></g><rect x="8.4" y="5.6" width="2.4" height="2.4" fill="#fff"/><rect x="13.4" y="5.6" width="2.4" height="2.4" fill="#fff"/></svg>
<div class="t" style="left:3426.9px;top:2092.0px;font-size:26px;line-height:30px;color:#fff;letter-spacing:-0.98px;">ENG</div>
<svg style="position:absolute;left:3520px;top:2086px;" width="40" height="40" viewBox="0 0 40 40"><g fill="none" stroke="#fff" stroke-width="2"><path d="M26 5.2 H6 Q3 5.2 3 8.2 V28.6 Q3 31.6 6 31.6 H30.6"/><path d="M11.6 31.6 L10 37.4 M23.4 31.6 L25 37.4 M7.4 37.6 H30"/><rect x="28.6" y="2.4" width="8.6" height="12" rx="2.6" fill="#1c1c1c"/><path d="M30.8 7.6 H35"/><path d="M32.9 14.4 V38"/></g></svg>
<svg style="position:absolute;left:3574px;top:2088px;" width="40" height="36" viewBox="0 0 40 36"><g fill="none" stroke="#fff" stroke-width="2"><path d="M3 12.4 H8.4 L16.6 5 V31 L8.4 23.6 H3 Z" stroke-linejoin="round"/><path d="M21 13 Q24.2 18 21 23"/><path d="M25.2 9 Q31.4 18 25.2 27"/></g><path d="M30 4.6 Q39.6 18 30 31.4" fill="none" stroke="#5a5a5a" stroke-width="2"/></svg>
<div class="t" style="left:3648.6px;top:2073.0px;font-size:27px;line-height:30px;color:#fff;letter-spacing:-0.38px;">11:50:46 PM</div>
<div class="t" style="left:3666.6px;top:2110.0px;font-size:27px;line-height:30px;color:#fff;letter-spacing:0.71px;">26-Mar-26</div>
</body></html>
